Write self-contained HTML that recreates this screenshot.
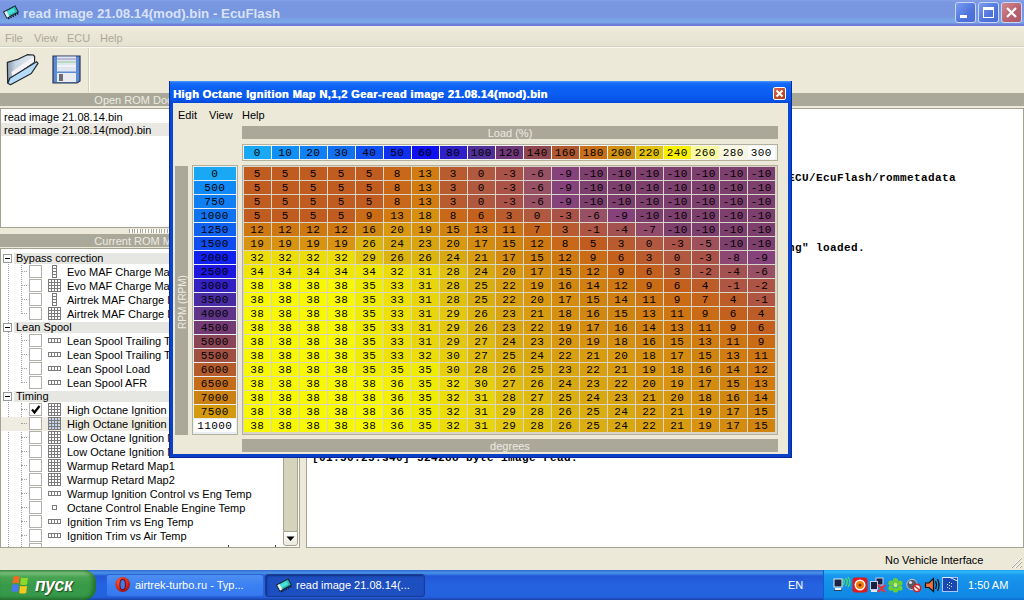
<!DOCTYPE html>
<html><head><meta charset="utf-8"><title>EcuFlash</title>
<style>
*{margin:0;padding:0;box-sizing:border-box}
html,body{width:1024px;height:600px;overflow:hidden}
body{position:relative;background:#ece9d8;font-family:"Liberation Sans",sans-serif;font-size:11px;color:#000}
.a{position:absolute}
.mono{font-family:"Liberation Mono",monospace}
.t{white-space:pre;line-height:13px}
</style></head><body>

<div class="a" style="left:0;top:0;width:1024px;height:26px;background:linear-gradient(#86a0e8 0,#7a98e2 2px,#7896e0 12px,#7898e0 17px,#7aa8e8 21px,#78a4e6 23px,#7080d8 24px,#6c7cd4 26px)"></div>
<svg class="a" style="left:1px;top:2px" width="20" height="18" viewBox="0 0 20 18">
<g transform="rotate(-28 10 10)"><path d="M5 13.5v2M7.5 13.5v2M10 13.5v2M12.5 13.5v2M15 13.5v2" stroke="#101828" stroke-width="1.4"/>
<rect x="3.5" y="6.5" width="13" height="7" fill="#2ab8b0" stroke="#182030" stroke-width="1"/><rect x="6" y="7.5" width="8" height="4" fill="#48e0d8"/><rect x="4" y="7" width="2.5" height="6" fill="#e8f0e8"/></g></svg>
<div class="a t" style="left:23px;top:6px;font-size:13.3px;font-weight:bold;color:#d8e2f8;line-height:16px">read image 21.08.14(mod).bin - EcuFlash</div>
<div class="a" style="left:955px;top:2px;width:21px;height:21px;border:1px solid #c8d6f6;border-radius:3px;background:linear-gradient(135deg,#7a9cf0,#4f74dc 60%,#4a6cd6)"><div class="a" style="left:4px;top:12px;width:7px;height:3px;background:#fff"></div></div>
<div class="a" style="left:978px;top:2px;width:21px;height:21px;border:1px solid #c8d6f6;border-radius:3px;background:linear-gradient(135deg,#7a9cf0,#4f74dc 60%,#4a6cd6)"><div class="a" style="left:4px;top:4px;width:11px;height:11px;border:1px solid #fff;border-top-width:3px"></div></div>
<div class="a" style="left:1001px;top:2px;width:21px;height:21px;border:1px solid #c8d6f6;border-radius:3px;background:linear-gradient(135deg,#d08888,#b86070 60%,#b05868)"><svg class="a" style="left:3px;top:3px" width="13" height="13"><path d="M2 2L11 11M11 2L2 11" stroke="#fff" stroke-width="2.2"/></svg></div>
<div class="a" style="left:0;top:26px;width:1024px;height:22px;background:#ece9d8;border-bottom:1px solid #faf9f2"></div><div class="a" style="left:0;top:26px;width:1024px;height:20px;background:linear-gradient(#f0eee4,#ece9d8 4px,#e6e2d2)"></div><div class="a" style="left:0;top:46px;width:1024px;height:1px;background:#d6d2c0"></div>
<div class="a t" style="left:5px;top:32px;color:#aca899">File</div>
<div class="a t" style="left:34px;top:32px;color:#aca899">View</div>
<div class="a t" style="left:67px;top:32px;color:#aca899">ECU</div>
<div class="a t" style="left:100px;top:32px;color:#aca899">Help</div>
<div class="a" style="left:0;top:48px;width:1024px;height:44px;background:#ece9d8"></div>
<div class="a" style="left:88px;top:48px;width:1px;height:44px;background:#d4d0c0"></div>
<div class="a" style="left:89px;top:48px;width:1px;height:44px;background:#fbfaf4"></div>
<svg class="a" style="left:0;top:44px" width="50" height="50" viewBox="0 44 50 50">
<defs><linearGradient id="fb" x1="0" y1="0" x2="1" y2="0"><stop offset="0" stop-color="#8898a8"/><stop offset="0.3" stop-color="#c8d6e4"/><stop offset="1" stop-color="#e4ecf4"/></linearGradient></defs>
<path d="M7.3 62.3 L15.3 60 L18 59.3 L27.3 54.7 L33.3 55 L34.7 56.7 L34.5 61.5 L10.3 78.5 L7.7 82.7 Z" fill="url(#fb)" stroke="#20282e" stroke-width="1.2" stroke-linejoin="round"/>
<path d="M11.5 72 L32 57.5 L34 59 L34 62 L12.5 77 Z" fill="#f6f2f6"/>
<path d="M9.8 78.3 L36.5 61.7 L38 63.3 L31.3 73.5 L10.5 84.7 L7.8 83.3 Z" fill="#b4dcf8" stroke="#20282e" stroke-width="1.2" stroke-linejoin="round"/>
</svg>
<svg class="a" style="left:52px;top:55px" width="30" height="30" viewBox="0 0 30 30">
<path d="M1 1 H28 V26 L25 28 H1 Z" fill="#5b8ad6" stroke="#2b3550" stroke-width="1.2"/>
<rect x="5" y="1.5" width="19" height="15" fill="#dfe6f0"/>
<rect x="5" y="3" width="19" height="2" fill="#b8b8d8"/><rect x="5" y="6" width="19" height="2" fill="#b8d8c0"/><rect x="5" y="10" width="19" height="2" fill="#f0f4f8"/>
<rect x="5" y="18" width="19" height="9" fill="#e8ecf0"/><rect x="7" y="19" width="4" height="7" fill="#6a6a70"/>
</svg>
<div class="a" style="left:0px;top:93px;width:303px;height:13px;background:#aaa899"></div>
<div class="a t" style="left:0px;top:94px;width:303px;text-align:center;color:#ecebe2">Open ROM Documents</div>
<div class="a" style="left:0;top:108px;width:300px;height:120px;background:#fff;border:1px solid #a5a292"></div>
<div class="a t" style="left:4px;top:111px">read image 21.08.14.bin</div>
<div class="a" style="left:1px;top:123px;width:298px;height:13px;background:#e9e8e2"></div>
<div class="a t" style="left:4px;top:124px">read image 21.08.14(mod).bin</div>
<div class="a" style="left:129px;top:229px;width:40px;height:4px;background:repeating-linear-gradient(90deg,#a8a594 0,#a8a594 1px,#fff 1px,#fff 2.7px)"></div>
<div class="a" style="left:0px;top:234px;width:303px;height:13px;background:#aaa899"></div>
<div class="a t" style="left:0px;top:235px;width:303px;text-align:center;color:#ecebe2">Current ROM Metadata</div>
<div class="a" style="left:0;top:248px;width:300px;height:300px;background:#fff;border:1px solid #a5a292"></div>
<div class="a" style="left:8px;top:264px;width:1px;height:283px;border-left:1px dotted #a0a0a0"></div>
<div class="a" style="left:21px;top:265px;width:1px;height:49px;border-left:1px dotted #a0a0a0"></div>
<div class="a" style="left:21px;top:334px;width:1px;height:49px;border-left:1px dotted #a0a0a0"></div>
<div class="a" style="left:21px;top:403px;width:1px;height:144px;border-left:1px dotted #a0a0a0"></div>
<div class="a" style="left:0;top:0;width:300px;height:547px;overflow:hidden">
<div class="a" style="left:14px;top:253px;width:286px;height:11px;background:#e6e6e2"></div>
<div class="a" style="left:3px;top:254px;width:9px;height:9px;border:1px solid #919b9c;background:#fff"></div>
<div class="a" style="left:5px;top:258px;width:5px;height:1px;background:#000"></div>
<div class="a t" style="left:16px;top:252px">Bypass correction</div>
<div class="a" style="left:21px;top:271px;width:6px;height:1px;border-top:1px dotted #a0a0a0"></div>
<div class="a" style="left:29px;top:265px;width:13px;height:13px;border:1px solid #b2b2aa;background:#fff"></div>
<svg class="a" style="left:52px;top:265px" width="5" height="13"><rect width="5" height="13" fill="#7a7a7a"/><rect x="1" y="1" width="3" height="2" fill="#fff"/><rect x="1" y="4" width="3" height="2" fill="#fff"/><rect x="1" y="7" width="3" height="2" fill="#fff"/><rect x="1" y="10" width="3" height="2" fill="#fff"/></svg>
<div class="a t" style="left:67px;top:266px">Evo MAF Charge Max Compensation</div>
<div class="a" style="left:21px;top:285px;width:6px;height:1px;border-top:1px dotted #a0a0a0"></div>
<div class="a" style="left:29px;top:279px;width:13px;height:13px;border:1px solid #b2b2aa;background:#fff"></div>
<svg class="a" style="left:48px;top:279px" width="13" height="13"><rect x="0" y="0" width="13" height="13" fill="#7a7a7a"/><rect x="1" y="1" width="2" height="2" fill="#fff"/><rect x="1" y="4" width="2" height="2" fill="#fff"/><rect x="1" y="7" width="2" height="2" fill="#fff"/><rect x="1" y="10" width="2" height="2" fill="#fff"/><rect x="4" y="1" width="2" height="2" fill="#fff"/><rect x="4" y="4" width="2" height="2" fill="#fff"/><rect x="4" y="7" width="2" height="2" fill="#fff"/><rect x="4" y="10" width="2" height="2" fill="#fff"/><rect x="7" y="1" width="2" height="2" fill="#fff"/><rect x="7" y="4" width="2" height="2" fill="#fff"/><rect x="7" y="7" width="2" height="2" fill="#fff"/><rect x="7" y="10" width="2" height="2" fill="#fff"/><rect x="10" y="1" width="2" height="2" fill="#fff"/><rect x="10" y="4" width="2" height="2" fill="#fff"/><rect x="10" y="7" width="2" height="2" fill="#fff"/><rect x="10" y="10" width="2" height="2" fill="#fff"/></svg>
<div class="a t" style="left:67px;top:280px">Evo MAF Charge Max Compensation</div>
<div class="a" style="left:21px;top:299px;width:6px;height:1px;border-top:1px dotted #a0a0a0"></div>
<div class="a" style="left:29px;top:293px;width:13px;height:13px;border:1px solid #b2b2aa;background:#fff"></div>
<svg class="a" style="left:52px;top:293px" width="5" height="13"><rect width="5" height="13" fill="#7a7a7a"/><rect x="1" y="1" width="3" height="2" fill="#fff"/><rect x="1" y="4" width="3" height="2" fill="#fff"/><rect x="1" y="7" width="3" height="2" fill="#fff"/><rect x="1" y="10" width="3" height="2" fill="#fff"/></svg>
<div class="a t" style="left:67px;top:294px">Airtrek MAF Charge Max Compensation</div>
<div class="a" style="left:21px;top:313px;width:6px;height:1px;border-top:1px dotted #a0a0a0"></div>
<div class="a" style="left:29px;top:307px;width:13px;height:13px;border:1px solid #b2b2aa;background:#fff"></div>
<svg class="a" style="left:48px;top:307px" width="13" height="13"><rect x="0" y="0" width="13" height="13" fill="#7a7a7a"/><rect x="1" y="1" width="2" height="2" fill="#fff"/><rect x="1" y="4" width="2" height="2" fill="#fff"/><rect x="1" y="7" width="2" height="2" fill="#fff"/><rect x="1" y="10" width="2" height="2" fill="#fff"/><rect x="4" y="1" width="2" height="2" fill="#fff"/><rect x="4" y="4" width="2" height="2" fill="#fff"/><rect x="4" y="7" width="2" height="2" fill="#fff"/><rect x="4" y="10" width="2" height="2" fill="#fff"/><rect x="7" y="1" width="2" height="2" fill="#fff"/><rect x="7" y="4" width="2" height="2" fill="#fff"/><rect x="7" y="7" width="2" height="2" fill="#fff"/><rect x="7" y="10" width="2" height="2" fill="#fff"/><rect x="10" y="1" width="2" height="2" fill="#fff"/><rect x="10" y="4" width="2" height="2" fill="#fff"/><rect x="10" y="7" width="2" height="2" fill="#fff"/><rect x="10" y="10" width="2" height="2" fill="#fff"/></svg>
<div class="a t" style="left:67px;top:308px">Airtrek MAF Charge Max Compensation</div>
<div class="a" style="left:14px;top:322px;width:286px;height:11px;background:#e6e6e2"></div>
<div class="a" style="left:3px;top:323px;width:9px;height:9px;border:1px solid #919b9c;background:#fff"></div>
<div class="a" style="left:5px;top:327px;width:5px;height:1px;background:#000"></div>
<div class="a t" style="left:16px;top:321px">Lean Spool</div>
<div class="a" style="left:21px;top:340px;width:6px;height:1px;border-top:1px dotted #a0a0a0"></div>
<div class="a" style="left:29px;top:334px;width:13px;height:13px;border:1px solid #b2b2aa;background:#fff"></div>
<svg class="a" style="left:48px;top:338px" width="13" height="5"><rect width="13" height="5" fill="#7a7a7a"/><rect x="1" y="1" width="2" height="3" fill="#fff"/><rect x="4" y="1" width="2" height="3" fill="#fff"/><rect x="7" y="1" width="2" height="3" fill="#fff"/><rect x="10" y="1" width="2" height="3" fill="#fff"/></svg>
<div class="a t" style="left:67px;top:335px">Lean Spool Trailing Timing</div>
<div class="a" style="left:21px;top:354px;width:6px;height:1px;border-top:1px dotted #a0a0a0"></div>
<div class="a" style="left:29px;top:348px;width:13px;height:13px;border:1px solid #b2b2aa;background:#fff"></div>
<svg class="a" style="left:48px;top:352px" width="13" height="5"><rect width="13" height="5" fill="#7a7a7a"/><rect x="1" y="1" width="2" height="3" fill="#fff"/><rect x="4" y="1" width="2" height="3" fill="#fff"/><rect x="7" y="1" width="2" height="3" fill="#fff"/><rect x="10" y="1" width="2" height="3" fill="#fff"/></svg>
<div class="a t" style="left:67px;top:349px">Lean Spool Trailing Timing</div>
<div class="a" style="left:21px;top:368px;width:6px;height:1px;border-top:1px dotted #a0a0a0"></div>
<div class="a" style="left:29px;top:362px;width:13px;height:13px;border:1px solid #b2b2aa;background:#fff"></div>
<svg class="a" style="left:48px;top:366px" width="13" height="5"><rect width="13" height="5" fill="#7a7a7a"/><rect x="1" y="1" width="2" height="3" fill="#fff"/><rect x="4" y="1" width="2" height="3" fill="#fff"/><rect x="7" y="1" width="2" height="3" fill="#fff"/><rect x="10" y="1" width="2" height="3" fill="#fff"/></svg>
<div class="a t" style="left:67px;top:363px">Lean Spool Load</div>
<div class="a" style="left:21px;top:382px;width:6px;height:1px;border-top:1px dotted #a0a0a0"></div>
<div class="a" style="left:29px;top:376px;width:13px;height:13px;border:1px solid #b2b2aa;background:#fff"></div>
<svg class="a" style="left:48px;top:380px" width="13" height="5"><rect width="13" height="5" fill="#7a7a7a"/><rect x="1" y="1" width="2" height="3" fill="#fff"/><rect x="4" y="1" width="2" height="3" fill="#fff"/><rect x="7" y="1" width="2" height="3" fill="#fff"/><rect x="10" y="1" width="2" height="3" fill="#fff"/></svg>
<div class="a t" style="left:67px;top:377px">Lean Spool AFR</div>
<div class="a" style="left:14px;top:391px;width:286px;height:11px;background:#e6e6e2"></div>
<div class="a" style="left:3px;top:392px;width:9px;height:9px;border:1px solid #919b9c;background:#fff"></div>
<div class="a" style="left:5px;top:396px;width:5px;height:1px;background:#000"></div>
<div class="a t" style="left:16px;top:390px">Timing</div>
<div class="a" style="left:21px;top:409px;width:6px;height:1px;border-top:1px dotted #a0a0a0"></div>
<div class="a" style="left:29px;top:403px;width:13px;height:13px;border:1px solid #b2b2aa;background:#fff"></div>
<svg class="a" style="left:29px;top:403px" width="13" height="13"><path d="M3 6.5 L5.5 9.5 L10.5 3" fill="none" stroke="#000" stroke-width="2.2"/></svg>
<svg class="a" style="left:48px;top:403px" width="13" height="13"><rect x="0" y="0" width="13" height="13" fill="#7a7a7a"/><rect x="1" y="1" width="2" height="2" fill="#fff"/><rect x="1" y="4" width="2" height="2" fill="#fff"/><rect x="1" y="7" width="2" height="2" fill="#fff"/><rect x="1" y="10" width="2" height="2" fill="#fff"/><rect x="4" y="1" width="2" height="2" fill="#fff"/><rect x="4" y="4" width="2" height="2" fill="#fff"/><rect x="4" y="7" width="2" height="2" fill="#fff"/><rect x="4" y="10" width="2" height="2" fill="#fff"/><rect x="7" y="1" width="2" height="2" fill="#fff"/><rect x="7" y="4" width="2" height="2" fill="#fff"/><rect x="7" y="7" width="2" height="2" fill="#fff"/><rect x="7" y="10" width="2" height="2" fill="#fff"/><rect x="10" y="1" width="2" height="2" fill="#fff"/><rect x="10" y="4" width="2" height="2" fill="#fff"/><rect x="10" y="7" width="2" height="2" fill="#fff"/><rect x="10" y="10" width="2" height="2" fill="#fff"/></svg>
<div class="a t" style="left:67px;top:404px">High Octane Ignition Map N,1,2 Gear</div>
<div class="a" style="left:1px;top:417px;width:299px;height:14px;background:#efede2"></div>
<div class="a" style="left:21px;top:423px;width:6px;height:1px;border-top:1px dotted #a0a0a0"></div>
<div class="a" style="left:29px;top:417px;width:13px;height:13px;border:1px solid #b2b2aa;background:#fff"></div>
<svg class="a" style="left:48px;top:417px" width="13" height="13"><rect x="0" y="0" width="13" height="13" fill="#7a7a7a"/><rect x="1" y="1" width="2" height="2" fill="#c6d4ee"/><rect x="1" y="4" width="2" height="2" fill="#c6d4ee"/><rect x="1" y="7" width="2" height="2" fill="#c6d4ee"/><rect x="1" y="10" width="2" height="2" fill="#c6d4ee"/><rect x="4" y="1" width="2" height="2" fill="#c6d4ee"/><rect x="4" y="4" width="2" height="2" fill="#c6d4ee"/><rect x="4" y="7" width="2" height="2" fill="#c6d4ee"/><rect x="4" y="10" width="2" height="2" fill="#c6d4ee"/><rect x="7" y="1" width="2" height="2" fill="#c6d4ee"/><rect x="7" y="4" width="2" height="2" fill="#c6d4ee"/><rect x="7" y="7" width="2" height="2" fill="#c6d4ee"/><rect x="7" y="10" width="2" height="2" fill="#c6d4ee"/><rect x="10" y="1" width="2" height="2" fill="#c6d4ee"/><rect x="10" y="4" width="2" height="2" fill="#c6d4ee"/><rect x="10" y="7" width="2" height="2" fill="#c6d4ee"/><rect x="10" y="10" width="2" height="2" fill="#c6d4ee"/></svg>
<div class="a t" style="left:67px;top:418px">High Octane Ignition Map 3,4,5 Gear</div>
<div class="a" style="left:21px;top:437px;width:6px;height:1px;border-top:1px dotted #a0a0a0"></div>
<div class="a" style="left:29px;top:431px;width:13px;height:13px;border:1px solid #b2b2aa;background:#fff"></div>
<svg class="a" style="left:48px;top:431px" width="13" height="13"><rect x="0" y="0" width="13" height="13" fill="#7a7a7a"/><rect x="1" y="1" width="2" height="2" fill="#fff"/><rect x="1" y="4" width="2" height="2" fill="#fff"/><rect x="1" y="7" width="2" height="2" fill="#fff"/><rect x="1" y="10" width="2" height="2" fill="#fff"/><rect x="4" y="1" width="2" height="2" fill="#fff"/><rect x="4" y="4" width="2" height="2" fill="#fff"/><rect x="4" y="7" width="2" height="2" fill="#fff"/><rect x="4" y="10" width="2" height="2" fill="#fff"/><rect x="7" y="1" width="2" height="2" fill="#fff"/><rect x="7" y="4" width="2" height="2" fill="#fff"/><rect x="7" y="7" width="2" height="2" fill="#fff"/><rect x="7" y="10" width="2" height="2" fill="#fff"/><rect x="10" y="1" width="2" height="2" fill="#fff"/><rect x="10" y="4" width="2" height="2" fill="#fff"/><rect x="10" y="7" width="2" height="2" fill="#fff"/><rect x="10" y="10" width="2" height="2" fill="#fff"/></svg>
<div class="a t" style="left:67px;top:432px">Low Octane Ignition Map</div>
<div class="a" style="left:21px;top:451px;width:6px;height:1px;border-top:1px dotted #a0a0a0"></div>
<div class="a" style="left:29px;top:445px;width:13px;height:13px;border:1px solid #b2b2aa;background:#fff"></div>
<svg class="a" style="left:48px;top:445px" width="13" height="13"><rect x="0" y="0" width="13" height="13" fill="#7a7a7a"/><rect x="1" y="1" width="2" height="2" fill="#fff"/><rect x="1" y="4" width="2" height="2" fill="#fff"/><rect x="1" y="7" width="2" height="2" fill="#fff"/><rect x="1" y="10" width="2" height="2" fill="#fff"/><rect x="4" y="1" width="2" height="2" fill="#fff"/><rect x="4" y="4" width="2" height="2" fill="#fff"/><rect x="4" y="7" width="2" height="2" fill="#fff"/><rect x="4" y="10" width="2" height="2" fill="#fff"/><rect x="7" y="1" width="2" height="2" fill="#fff"/><rect x="7" y="4" width="2" height="2" fill="#fff"/><rect x="7" y="7" width="2" height="2" fill="#fff"/><rect x="7" y="10" width="2" height="2" fill="#fff"/><rect x="10" y="1" width="2" height="2" fill="#fff"/><rect x="10" y="4" width="2" height="2" fill="#fff"/><rect x="10" y="7" width="2" height="2" fill="#fff"/><rect x="10" y="10" width="2" height="2" fill="#fff"/></svg>
<div class="a t" style="left:67px;top:446px">Low Octane Ignition Map</div>
<div class="a" style="left:21px;top:465px;width:6px;height:1px;border-top:1px dotted #a0a0a0"></div>
<div class="a" style="left:29px;top:459px;width:13px;height:13px;border:1px solid #b2b2aa;background:#fff"></div>
<svg class="a" style="left:48px;top:459px" width="13" height="13"><rect x="0" y="0" width="13" height="13" fill="#7a7a7a"/><rect x="1" y="1" width="2" height="2" fill="#fff"/><rect x="1" y="4" width="2" height="2" fill="#fff"/><rect x="1" y="7" width="2" height="2" fill="#fff"/><rect x="1" y="10" width="2" height="2" fill="#fff"/><rect x="4" y="1" width="2" height="2" fill="#fff"/><rect x="4" y="4" width="2" height="2" fill="#fff"/><rect x="4" y="7" width="2" height="2" fill="#fff"/><rect x="4" y="10" width="2" height="2" fill="#fff"/><rect x="7" y="1" width="2" height="2" fill="#fff"/><rect x="7" y="4" width="2" height="2" fill="#fff"/><rect x="7" y="7" width="2" height="2" fill="#fff"/><rect x="7" y="10" width="2" height="2" fill="#fff"/><rect x="10" y="1" width="2" height="2" fill="#fff"/><rect x="10" y="4" width="2" height="2" fill="#fff"/><rect x="10" y="7" width="2" height="2" fill="#fff"/><rect x="10" y="10" width="2" height="2" fill="#fff"/></svg>
<div class="a t" style="left:67px;top:460px">Warmup Retard Map1</div>
<div class="a" style="left:21px;top:479px;width:6px;height:1px;border-top:1px dotted #a0a0a0"></div>
<div class="a" style="left:29px;top:473px;width:13px;height:13px;border:1px solid #b2b2aa;background:#fff"></div>
<svg class="a" style="left:48px;top:473px" width="13" height="13"><rect x="0" y="0" width="13" height="13" fill="#7a7a7a"/><rect x="1" y="1" width="2" height="2" fill="#fff"/><rect x="1" y="4" width="2" height="2" fill="#fff"/><rect x="1" y="7" width="2" height="2" fill="#fff"/><rect x="1" y="10" width="2" height="2" fill="#fff"/><rect x="4" y="1" width="2" height="2" fill="#fff"/><rect x="4" y="4" width="2" height="2" fill="#fff"/><rect x="4" y="7" width="2" height="2" fill="#fff"/><rect x="4" y="10" width="2" height="2" fill="#fff"/><rect x="7" y="1" width="2" height="2" fill="#fff"/><rect x="7" y="4" width="2" height="2" fill="#fff"/><rect x="7" y="7" width="2" height="2" fill="#fff"/><rect x="7" y="10" width="2" height="2" fill="#fff"/><rect x="10" y="1" width="2" height="2" fill="#fff"/><rect x="10" y="4" width="2" height="2" fill="#fff"/><rect x="10" y="7" width="2" height="2" fill="#fff"/><rect x="10" y="10" width="2" height="2" fill="#fff"/></svg>
<div class="a t" style="left:67px;top:474px">Warmup Retard Map2</div>
<div class="a" style="left:21px;top:493px;width:6px;height:1px;border-top:1px dotted #a0a0a0"></div>
<div class="a" style="left:29px;top:487px;width:13px;height:13px;border:1px solid #b2b2aa;background:#fff"></div>
<svg class="a" style="left:48px;top:491px" width="13" height="5"><rect width="13" height="5" fill="#7a7a7a"/><rect x="1" y="1" width="2" height="3" fill="#fff"/><rect x="4" y="1" width="2" height="3" fill="#fff"/><rect x="7" y="1" width="2" height="3" fill="#fff"/><rect x="10" y="1" width="2" height="3" fill="#fff"/></svg>
<div class="a t" style="left:67px;top:488px">Warmup Ignition Control vs Eng Temp</div>
<div class="a" style="left:21px;top:507px;width:6px;height:1px;border-top:1px dotted #a0a0a0"></div>
<div class="a" style="left:29px;top:501px;width:13px;height:13px;border:1px solid #b2b2aa;background:#fff"></div>
<div class="a" style="left:52px;top:505px;width:5px;height:5px;border:1px solid #7a7a7a;background:#fff"></div>
<div class="a t" style="left:67px;top:502px">Octane Control Enable Engine Temp</div>
<div class="a" style="left:21px;top:521px;width:6px;height:1px;border-top:1px dotted #a0a0a0"></div>
<div class="a" style="left:29px;top:515px;width:13px;height:13px;border:1px solid #b2b2aa;background:#fff"></div>
<svg class="a" style="left:48px;top:519px" width="13" height="5"><rect width="13" height="5" fill="#7a7a7a"/><rect x="1" y="1" width="2" height="3" fill="#fff"/><rect x="4" y="1" width="2" height="3" fill="#fff"/><rect x="7" y="1" width="2" height="3" fill="#fff"/><rect x="10" y="1" width="2" height="3" fill="#fff"/></svg>
<div class="a t" style="left:67px;top:516px">Ignition Trim vs Eng Temp</div>
<div class="a" style="left:21px;top:535px;width:6px;height:1px;border-top:1px dotted #a0a0a0"></div>
<div class="a" style="left:29px;top:529px;width:13px;height:13px;border:1px solid #b2b2aa;background:#fff"></div>
<svg class="a" style="left:48px;top:533px" width="13" height="5"><rect width="13" height="5" fill="#7a7a7a"/><rect x="1" y="1" width="2" height="3" fill="#fff"/><rect x="4" y="1" width="2" height="3" fill="#fff"/><rect x="7" y="1" width="2" height="3" fill="#fff"/><rect x="10" y="1" width="2" height="3" fill="#fff"/></svg>
<div class="a t" style="left:67px;top:530px">Ignition Trim vs Air Temp</div>
<div class="a" style="left:21px;top:549px;width:6px;height:1px;border-top:1px dotted #a0a0a0"></div>
<div class="a" style="left:29px;top:543px;width:13px;height:13px;border:1px solid #b2b2aa;background:#fff"></div>
<svg class="a" style="left:48px;top:547px" width="13" height="5"><rect width="13" height="5" fill="#7a7a7a"/><rect x="1" y="1" width="2" height="3" fill="#fff"/><rect x="4" y="1" width="2" height="3" fill="#fff"/><rect x="7" y="1" width="2" height="3" fill="#fff"/><rect x="10" y="1" width="2" height="3" fill="#fff"/></svg>
<div class="a t" style="left:67px;top:544px"></div>
</div>
<div class="a" style="left:228px;top:545px;width:1px;height:2px;background:#444"></div><div class="a" style="left:275px;top:545px;width:1px;height:2px;background:#444"></div>
<div class="a" style="left:282px;top:249px;width:17px;height:298px;background:#fbfbf8"></div>
<div class="a" style="left:283px;top:262px;width:15px;height:270px;background:#d6d3bc;border:1px solid #a6a48e;border-radius:2px"></div>
<div class="a" style="left:283px;top:531px;width:15px;height:15px;background:linear-gradient(#fff,#ebe9dc);border:1px solid #a6a48e;border-radius:0 0 3px 3px"></div>
<svg class="a" style="left:286px;top:535px" width="9" height="7"><path d="M0.5 1.5 H8.5 L4.5 6 Z" fill="#000"/></svg>
<div class="a" style="left:306px;top:93px;width:718px;height:13px;background:#aaa899"></div>
<div class="a t" style="left:306px;top:94px;width:718px;text-align:center;color:#ecebe2">Log</div>
<div class="a" style="left:306px;top:108px;width:718px;height:440px;background:#fff;border:1px solid #a5a292"></div>
<div class="a mono" style="left:312px;top:115px;white-space:pre;font-size:11px;letter-spacing:0.4px;line-height:14px;font-weight:bold">[01:50:20.109] EcuFlash 1.42.2595 started.</div>
<div class="a mono" style="left:312px;top:171px;white-space:pre;font-size:11px;letter-spacing:0.4px;line-height:14px;font-weight:bold">[01:50:20.156] loading metadata from C:/Program Files/Open Source/OpECU/EcuFlash/rommetadata</div>
<div class="a mono" style="left:312px;top:241px;white-space:pre;font-size:11px;letter-spacing:0.4px;line-height:14px;font-weight:bold">[01:50:21.453] metadata "C:/Program Files/OpenECU/rommetadata/stri  ng" loaded.</div>
<div class="a mono" style="left:312px;top:451px;white-space:pre;font-size:11px;letter-spacing:0.4px;line-height:14px;font-weight:bold">[01:50:25.340] 524288 byte image read.</div>
<div class="a t" style="left:885px;top:554px">No Vehicle Interface</div>
<svg class="a" style="left:1010px;top:556px" width="13" height="13"><path d="M12 1L1 12M12 5L5 12M12 9L9 12" stroke="#fff" stroke-width="1"/><path d="M12 2L2 12M12 6L6 12M12 10L10 12" stroke="#aca899" stroke-width="1"/></svg>
<div class="a" style="left:0;top:570px;width:1024px;height:30px;background:linear-gradient(#3168d5 0,#4993e6 3px,#2157d7 6px,#2663e0 50%,#2461df 90%,#1941a5 100%)"></div>
<div class="a" style="left:0;top:570px;width:96px;height:30px;border-radius:0 12px 12px 0;background:linear-gradient(#4a9a50 0,#78c07c 3px,#48a452 7px,#389a48 50%,#36984a 85%,#2c7e3a 100%);box-shadow:inset -3px 0 4px rgba(0,60,0,.45)"></div>
<svg class="a" style="left:11px;top:575px" width="20" height="19" viewBox="0 0 20 19">
<path d="M2.5 1.5 Q5.5 0.5 8.5 1.5 L7.8 8.5 Q5 7.5 1.5 8.5 Z" fill="#f06a20"/>
<path d="M10 2.5 Q13.5 3.5 17 2.5 L16 9.5 Q12.5 10.5 9.2 9.5 Z" fill="#8ed828"/>
<path d="M1.3 9.8 Q4.5 8.8 7.6 9.8 L6.8 17 Q4 16 0.5 17 Z" fill="#4a78f0"/>
<path d="M9 10.8 Q12.5 11.8 16 10.8 L15.2 18 Q11.5 19 8.2 18 Z" fill="#f8c820"/>
</svg>
<div class="a t" style="left:35px;top:575px;font-size:17.5px;letter-spacing:-0.4px;line-height:20px;font-weight:bold;font-style:italic;color:#fff;text-shadow:1px 1px 1px #1a4a1a">пуск</div>
<div class="a" style="left:106px;top:574px;width:158px;height:23px;border-radius:3px;background:linear-gradient(#4d8ef0,#3c81f3 50%,#3478ee);border:1px solid #2a64d8"></div>
<svg class="a" style="left:115px;top:577px" width="16" height="16"><defs><radialGradient id="op" cx="0.4" cy="0.35" r="0.7"><stop offset="0" stop-color="#ff7040"/><stop offset="0.6" stop-color="#e02810"/><stop offset="1" stop-color="#901010"/></radialGradient></defs><ellipse cx="7.7" cy="7.5" rx="7.3" ry="7.5" fill="url(#op)"/><ellipse cx="7.7" cy="7.5" rx="2.8" ry="5.2" fill="#3c7ef0" stroke="#701030" stroke-width="1.2"/></svg>
<div class="a t" style="left:135px;top:579px;color:#fff">airtrek-turbo.ru - Typ...</div>
<div class="a" style="left:265px;top:574px;width:160px;height:23px;border-radius:3px;background:#1e4fc0;border:1px solid #183c98;box-shadow:inset 1px 1px 2px #10307c"></div>
<svg class="a" style="left:274px;top:575px" width="20" height="18" viewBox="0 0 20 18">
<g transform="rotate(-28 10 10)"><path d="M5 13.5v2M7.5 13.5v2M10 13.5v2M12.5 13.5v2M15 13.5v2" stroke="#101828" stroke-width="1.4"/>
<rect x="3.5" y="6.5" width="13" height="7" fill="#2ab8b0" stroke="#182030" stroke-width="1"/><rect x="6" y="7.5" width="8" height="4" fill="#48e0d8"/><rect x="4" y="7" width="2.5" height="6" fill="#e8f0e8"/></g></svg>
<div class="a t" style="left:296px;top:579px;color:#fff">read image 21.08.14(...</div>
<div class="a t" style="left:788px;top:579px;color:#fff">EN</div>
<div class="a" style="left:823px;top:570px;width:201px;height:30px;background:linear-gradient(#18a0f0 0,#30b8fa 2px,#1898ec 5px,#148ee8 50%,#1088e4 90%,#0c70d0 100%);border-left:1px solid #0a60cc"></div>
<svg class="a" style="left:826px;top:572px" width="140" height="26" viewBox="826 572 140 26">
<rect x="834" y="579" width="8" height="8" fill="#1a2440" stroke="#e8eef8" stroke-width="1"/>
<rect x="835" y="588" width="6" height="2" fill="#f4f4f4"/><rect x="834" y="590" width="8" height="1" fill="#30405a"/>
<path d="M843 579 Q845.5 582 843 585 M845.5 578 Q849 582 845.5 586 M848 577 Q852 582 848 587" fill="none" stroke="#50e060" stroke-width="1.2"/>
<rect x="852.5" y="577.5" width="15" height="15" rx="3" fill="#e01818"/>
<circle cx="860" cy="585" r="5.5" fill="#fff"/><circle cx="860" cy="585" r="4" fill="#f08010"/><circle cx="860" cy="585" r="1.5" fill="#902000"/>
<rect x="876" y="578" width="7" height="7" fill="#1a2040" stroke="#c8d0f0" stroke-width="1"/>
<rect x="870.5" y="581.5" width="7" height="8" fill="#1a2040" stroke="#c8d0f0" stroke-width="1"/>
<rect x="871" y="590" width="6" height="2" fill="#e8e8f0"/>
<path d="M878 585 L885 592 M885 585 L878 592" stroke="#f03030" stroke-width="2"/>
<g fill="#6cd030"><circle cx="895.5" cy="580.5" r="2.6"/><circle cx="900" cy="583" r="2.6"/><circle cx="900" cy="588" r="2.6"/><circle cx="895.5" cy="590" r="2.6"/><circle cx="891" cy="588" r="2.6"/><circle cx="891" cy="583" r="2.6"/></g>
<circle cx="895.5" cy="585" r="2.2" fill="#c8f060"/>
<circle cx="912" cy="584.5" r="5.2" fill="#5a5a66" stroke="#c8c8d0" stroke-width="1"/><circle cx="910.5" cy="582.5" r="1.6" fill="#e0e0e8"/>
<circle cx="917" cy="588" r="3.6" fill="#fff" stroke="#d02020" stroke-width="1.6"/><path d="M914.5 586 L919.5 590" stroke="#d02020" stroke-width="1.4"/>
<path d="M925.5 583 H929 L933.5 578.5 V591.5 L929 587.5 H925.5 Z" fill="#f07040" stroke="#111" stroke-width="1.2"/>
<path d="M935.5 581 Q937.5 585 935.5 589 M937.5 579 Q940.5 585 937.5 591" fill="none" stroke="#111" stroke-width="1.2"/>
<rect x="942.5" y="577.5" width="15" height="14" fill="#1848b0" stroke="#a8c8ff" stroke-width="1"/>
<path d="M942.5 577.5 H950 L957.5 581" fill="none" stroke="#e0f0ff" stroke-width="1"/>
<g fill="#d0e4ff"><rect x="949" y="582" width="1" height="1"/><rect x="951" y="583" width="1" height="1"/><rect x="947" y="584" width="1" height="1"/><rect x="949" y="585" width="1" height="1"/><rect x="951" y="586" width="1" height="1"/><rect x="947" y="587" width="1" height="1"/><rect x="949" y="588" width="1" height="1"/></g>
</svg>
<div class="a t" style="left:968px;top:579px;color:#fff">1:50 AM</div>
<div class="a" style="left:169px;top:81px;width:623px;height:377px;background:linear-gradient(#4a9cff 0,#1a6cf8 2px,#0c62f4 6px,#0a5cf0 14px,#0854e8 19px,#0648d8 22px,#0a40c8 100%);box-shadow:inset 1px 0 0 #0828a0,inset -1px 0 0 #0828a0,inset 0 -1px 0 #0828a0"></div>
<div class="a" style="left:173px;top:103px;width:615px;height:351px;background:#ece9d8"></div>
<div class="a t" style="left:173px;top:88px;font-size:11px;letter-spacing:0.42px;font-weight:bold;color:#fff;text-shadow:0.5px 0 0 #fff">High Octane Ignition Map N,1,2 Gear-read image 21.08.14(mod).bin</div>
<div class="a" style="left:773px;top:87px;width:13px;height:13px;border:1px solid #fff;border-radius:2px;background:linear-gradient(135deg,#d86848,#c04828 60%,#b83c20)"></div>
<svg class="a" style="left:773px;top:87px" width="13" height="13"><path d="M3.5 3.5L9.5 9.5M9.5 3.5L3.5 9.5" stroke="#fff" stroke-width="2"/></svg>
<div class="a t" style="left:178px;top:109px">Edit</div>
<div class="a t" style="left:209px;top:109px">View</div>
<div class="a t" style="left:242px;top:109px">Help</div>
<div class="a" style="left:242px;top:126px;width:536px;height:13px;background:#aca899"></div>
<div class="a t" style="left:242px;top:127px;width:536px;text-align:center;color:#ecebe2">Load (%)</div>
<div class="a" style="left:242px;top:439px;width:536px;height:13px;background:#aca899"></div>
<div class="a t" style="left:242px;top:440px;width:536px;height:12px;overflow:hidden;text-align:center;color:#ecebe2">degrees</div>
<div class="a" style="left:175px;top:166px;width:13px;height:269px;background:#aca899"></div>
<div class="a t" style="left:176px;top:166px;width:272px;height:13px;font-size:10px;text-align:center;color:#ecebe2;transform-origin:0 0;transform:translate(0px,272px) rotate(-90deg)">RPM (RPM)</div>
<div class="a" style="left:242px;top:144px;width:536px;height:17px;border:1px solid #b4b09c;background:#f2f4f4"></div>
<div class="a mono" style="left:244px;top:146px;width:27px;height:13px;background:#18a8f4;text-align:center;font-size:11px;letter-spacing:0.4px;text-indent:-0.6px;line-height:14px">0</div>
<div class="a mono" style="left:272px;top:146px;width:27px;height:13px;background:#1090f4;text-align:center;font-size:11px;letter-spacing:0.4px;text-indent:-0.6px;line-height:14px">10</div>
<div class="a mono" style="left:300px;top:146px;width:27px;height:13px;background:#1080f4;text-align:center;font-size:11px;letter-spacing:0.4px;text-indent:-0.6px;line-height:14px">20</div>
<div class="a mono" style="left:328px;top:146px;width:27px;height:13px;background:#1070f0;text-align:center;font-size:11px;letter-spacing:0.4px;text-indent:-0.6px;line-height:14px">30</div>
<div class="a mono" style="left:356px;top:146px;width:27px;height:13px;background:#1050f0;text-align:center;font-size:11px;letter-spacing:0.4px;text-indent:-0.6px;line-height:14px">40</div>
<div class="a mono" style="left:384px;top:146px;width:27px;height:13px;background:#1030f0;text-align:center;font-size:11px;letter-spacing:0.4px;text-indent:-0.6px;line-height:14px">50</div>
<div class="a mono" style="left:412px;top:146px;width:27px;height:13px;background:#1010f0;text-align:center;font-size:11px;letter-spacing:0.4px;text-indent:-0.6px;line-height:14px">60</div>
<div class="a mono" style="left:440px;top:146px;width:27px;height:13px;background:#3020c8;text-align:center;font-size:11px;letter-spacing:0.4px;text-indent:-0.6px;line-height:14px">80</div>
<div class="a mono" style="left:468px;top:146px;width:27px;height:13px;background:#503098;text-align:center;font-size:11px;letter-spacing:0.4px;text-indent:-0.6px;line-height:14px">100</div>
<div class="a mono" style="left:496px;top:146px;width:27px;height:13px;background:#703878;text-align:center;font-size:11px;letter-spacing:0.4px;text-indent:-0.6px;line-height:14px">120</div>
<div class="a mono" style="left:524px;top:146px;width:27px;height:13px;background:#904850;text-align:center;font-size:11px;letter-spacing:0.4px;text-indent:-0.6px;line-height:14px">140</div>
<div class="a mono" style="left:552px;top:146px;width:27px;height:13px;background:#b05830;text-align:center;font-size:11px;letter-spacing:0.4px;text-indent:-0.6px;line-height:14px">160</div>
<div class="a mono" style="left:580px;top:146px;width:27px;height:13px;background:#c87018;text-align:center;font-size:11px;letter-spacing:0.4px;text-indent:-0.6px;line-height:14px">180</div>
<div class="a mono" style="left:608px;top:146px;width:27px;height:13px;background:#d09010;text-align:center;font-size:11px;letter-spacing:0.4px;text-indent:-0.6px;line-height:14px">200</div>
<div class="a mono" style="left:636px;top:146px;width:27px;height:13px;background:#e0c010;text-align:center;font-size:11px;letter-spacing:0.4px;text-indent:-0.6px;line-height:14px">220</div>
<div class="a mono" style="left:664px;top:146px;width:27px;height:13px;background:#f8f000;text-align:center;font-size:11px;letter-spacing:0.4px;text-indent:-0.6px;line-height:14px">240</div>
<div class="a mono" style="left:692px;top:146px;width:27px;height:13px;background:#f8f8a0;text-align:center;font-size:11px;letter-spacing:0.4px;text-indent:-0.6px;line-height:14px">260</div>
<div class="a mono" style="left:720px;top:146px;width:27px;height:13px;background:#f8f8e0;text-align:center;font-size:11px;letter-spacing:0.4px;text-indent:-0.6px;line-height:14px">280</div>
<div class="a mono" style="left:748px;top:146px;width:27px;height:13px;background:#ffffff;text-align:center;font-size:11px;letter-spacing:0.4px;text-indent:-0.6px;line-height:14px">300</div>
<div class="a" style="left:192px;top:165px;width:46px;height:270px;border:1px solid #b4b09c;background:#e8eef4"></div>
<div class="a mono" style="left:194px;top:167px;width:42px;height:13px;background:#18a8f4;text-align:center;font-size:11px;letter-spacing:0.4px;text-indent:-0.6px;line-height:14px">0</div>
<div class="a mono" style="left:194px;top:181px;width:42px;height:13px;background:#108af4;text-align:center;font-size:11px;letter-spacing:0.4px;text-indent:-0.6px;line-height:14px">500</div>
<div class="a mono" style="left:194px;top:195px;width:42px;height:13px;background:#107ff4;text-align:center;font-size:11px;letter-spacing:0.4px;text-indent:-0.6px;line-height:14px">750</div>
<div class="a mono" style="left:194px;top:209px;width:42px;height:13px;background:#1074f1;text-align:center;font-size:11px;letter-spacing:0.4px;text-indent:-0.6px;line-height:14px">1000</div>
<div class="a mono" style="left:194px;top:223px;width:42px;height:13px;background:#1063f0;text-align:center;font-size:11px;letter-spacing:0.4px;text-indent:-0.6px;line-height:14px">1250</div>
<div class="a mono" style="left:194px;top:237px;width:42px;height:13px;background:#104df0;text-align:center;font-size:11px;letter-spacing:0.4px;text-indent:-0.6px;line-height:14px">1500</div>
<div class="a mono" style="left:194px;top:251px;width:42px;height:13px;background:#1021f0;text-align:center;font-size:11px;letter-spacing:0.4px;text-indent:-0.6px;line-height:14px">2000</div>
<div class="a mono" style="left:194px;top:265px;width:42px;height:13px;background:#1d17e0;text-align:center;font-size:11px;letter-spacing:0.4px;text-indent:-0.6px;line-height:14px">2500</div>
<div class="a mono" style="left:194px;top:279px;width:42px;height:13px;background:#3321c4;text-align:center;font-size:11px;letter-spacing:0.4px;text-indent:-0.6px;line-height:14px">3000</div>
<div class="a mono" style="left:194px;top:293px;width:42px;height:13px;background:#492ca3;text-align:center;font-size:11px;letter-spacing:0.4px;text-indent:-0.6px;line-height:14px">3500</div>
<div class="a mono" style="left:194px;top:307px;width:42px;height:13px;background:#5f3489;text-align:center;font-size:11px;letter-spacing:0.4px;text-indent:-0.6px;line-height:14px">4000</div>
<div class="a mono" style="left:194px;top:321px;width:42px;height:13px;background:#743a73;text-align:center;font-size:11px;letter-spacing:0.4px;text-indent:-0.6px;line-height:14px">4500</div>
<div class="a mono" style="left:194px;top:335px;width:42px;height:13px;background:#8a4557;text-align:center;font-size:11px;letter-spacing:0.4px;text-indent:-0.6px;line-height:14px">5000</div>
<div class="a mono" style="left:194px;top:349px;width:42px;height:13px;background:#a05040;text-align:center;font-size:11px;letter-spacing:0.4px;text-indent:-0.6px;line-height:14px">5500</div>
<div class="a mono" style="left:194px;top:363px;width:42px;height:13px;background:#b45c2c;text-align:center;font-size:11px;letter-spacing:0.4px;text-indent:-0.6px;line-height:14px">6000</div>
<div class="a mono" style="left:194px;top:377px;width:42px;height:13px;background:#c56d1b;text-align:center;font-size:11px;letter-spacing:0.4px;text-indent:-0.6px;line-height:14px">6500</div>
<div class="a mono" style="left:194px;top:391px;width:42px;height:13px;background:#cc8114;text-align:center;font-size:11px;letter-spacing:0.4px;text-indent:-0.6px;line-height:14px">7000</div>
<div class="a mono" style="left:194px;top:405px;width:42px;height:13px;background:#d49b10;text-align:center;font-size:11px;letter-spacing:0.4px;text-indent:-0.6px;line-height:14px">7500</div>
<div class="a mono" style="left:194px;top:419px;width:42px;height:13px;background:#ffffff;text-align:center;font-size:11px;letter-spacing:0.4px;text-indent:-0.6px;line-height:14px">11000</div>
<div class="a" style="left:242px;top:165px;width:536px;height:270px;border:1px solid #b4b09c;background:#d8d4c8"></div>
<div class="a mono" style="left:244px;top:167px;width:27px;height:13px;background:#c05c20;text-align:center;font-size:11px;letter-spacing:0.4px;text-indent:-0.6px;line-height:14px">5</div>
<div class="a mono" style="left:272px;top:167px;width:27px;height:13px;background:#c05c20;text-align:center;font-size:11px;letter-spacing:0.4px;text-indent:-0.6px;line-height:14px">5</div>
<div class="a mono" style="left:300px;top:167px;width:27px;height:13px;background:#c05c20;text-align:center;font-size:11px;letter-spacing:0.4px;text-indent:-0.6px;line-height:14px">5</div>
<div class="a mono" style="left:328px;top:167px;width:27px;height:13px;background:#c05c20;text-align:center;font-size:11px;letter-spacing:0.4px;text-indent:-0.6px;line-height:14px">5</div>
<div class="a mono" style="left:356px;top:167px;width:27px;height:13px;background:#c05c20;text-align:center;font-size:11px;letter-spacing:0.4px;text-indent:-0.6px;line-height:14px">5</div>
<div class="a mono" style="left:384px;top:167px;width:27px;height:13px;background:#c86818;text-align:center;font-size:11px;letter-spacing:0.4px;text-indent:-0.6px;line-height:14px">8</div>
<div class="a mono" style="left:412px;top:167px;width:27px;height:13px;background:#d07c10;text-align:center;font-size:11px;letter-spacing:0.4px;text-indent:-0.6px;line-height:14px">13</div>
<div class="a mono" style="left:440px;top:167px;width:27px;height:13px;background:#b85c30;text-align:center;font-size:11px;letter-spacing:0.4px;text-indent:-0.6px;line-height:14px">3</div>
<div class="a mono" style="left:468px;top:167px;width:27px;height:13px;background:#b05840;text-align:center;font-size:11px;letter-spacing:0.4px;text-indent:-0.6px;line-height:14px">0</div>
<div class="a mono" style="left:496px;top:167px;width:27px;height:13px;background:#aa5248;text-align:center;font-size:11px;letter-spacing:0.4px;text-indent:-0.6px;line-height:14px">-3</div>
<div class="a mono" style="left:524px;top:167px;width:27px;height:13px;background:#985064;text-align:center;font-size:11px;letter-spacing:0.4px;text-indent:-0.6px;line-height:14px">-6</div>
<div class="a mono" style="left:552px;top:167px;width:27px;height:13px;background:#86427a;text-align:center;font-size:11px;letter-spacing:0.4px;text-indent:-0.6px;line-height:14px">-9</div>
<div class="a mono" style="left:580px;top:167px;width:27px;height:13px;background:#7d3f6e;text-align:center;font-size:11px;letter-spacing:0.4px;text-indent:-0.6px;line-height:14px">-10</div>
<div class="a mono" style="left:608px;top:167px;width:27px;height:13px;background:#7d3f6e;text-align:center;font-size:11px;letter-spacing:0.4px;text-indent:-0.6px;line-height:14px">-10</div>
<div class="a mono" style="left:636px;top:167px;width:27px;height:13px;background:#7d3f6e;text-align:center;font-size:11px;letter-spacing:0.4px;text-indent:-0.6px;line-height:14px">-10</div>
<div class="a mono" style="left:664px;top:167px;width:27px;height:13px;background:#7d3f6e;text-align:center;font-size:11px;letter-spacing:0.4px;text-indent:-0.6px;line-height:14px">-10</div>
<div class="a mono" style="left:692px;top:167px;width:27px;height:13px;background:#7d3f6e;text-align:center;font-size:11px;letter-spacing:0.4px;text-indent:-0.6px;line-height:14px">-10</div>
<div class="a mono" style="left:720px;top:167px;width:27px;height:13px;background:#7d3f6e;text-align:center;font-size:11px;letter-spacing:0.4px;text-indent:-0.6px;line-height:14px">-10</div>
<div class="a mono" style="left:748px;top:167px;width:27px;height:13px;background:#7d3f6e;text-align:center;font-size:11px;letter-spacing:0.4px;text-indent:-0.6px;line-height:14px">-10</div>
<div class="a mono" style="left:244px;top:181px;width:27px;height:13px;background:#c05c20;text-align:center;font-size:11px;letter-spacing:0.4px;text-indent:-0.6px;line-height:14px">5</div>
<div class="a mono" style="left:272px;top:181px;width:27px;height:13px;background:#c05c20;text-align:center;font-size:11px;letter-spacing:0.4px;text-indent:-0.6px;line-height:14px">5</div>
<div class="a mono" style="left:300px;top:181px;width:27px;height:13px;background:#c05c20;text-align:center;font-size:11px;letter-spacing:0.4px;text-indent:-0.6px;line-height:14px">5</div>
<div class="a mono" style="left:328px;top:181px;width:27px;height:13px;background:#c05c20;text-align:center;font-size:11px;letter-spacing:0.4px;text-indent:-0.6px;line-height:14px">5</div>
<div class="a mono" style="left:356px;top:181px;width:27px;height:13px;background:#c05c20;text-align:center;font-size:11px;letter-spacing:0.4px;text-indent:-0.6px;line-height:14px">5</div>
<div class="a mono" style="left:384px;top:181px;width:27px;height:13px;background:#c86818;text-align:center;font-size:11px;letter-spacing:0.4px;text-indent:-0.6px;line-height:14px">8</div>
<div class="a mono" style="left:412px;top:181px;width:27px;height:13px;background:#d07c10;text-align:center;font-size:11px;letter-spacing:0.4px;text-indent:-0.6px;line-height:14px">13</div>
<div class="a mono" style="left:440px;top:181px;width:27px;height:13px;background:#b85c30;text-align:center;font-size:11px;letter-spacing:0.4px;text-indent:-0.6px;line-height:14px">3</div>
<div class="a mono" style="left:468px;top:181px;width:27px;height:13px;background:#b05840;text-align:center;font-size:11px;letter-spacing:0.4px;text-indent:-0.6px;line-height:14px">0</div>
<div class="a mono" style="left:496px;top:181px;width:27px;height:13px;background:#aa5248;text-align:center;font-size:11px;letter-spacing:0.4px;text-indent:-0.6px;line-height:14px">-3</div>
<div class="a mono" style="left:524px;top:181px;width:27px;height:13px;background:#985064;text-align:center;font-size:11px;letter-spacing:0.4px;text-indent:-0.6px;line-height:14px">-6</div>
<div class="a mono" style="left:552px;top:181px;width:27px;height:13px;background:#86427a;text-align:center;font-size:11px;letter-spacing:0.4px;text-indent:-0.6px;line-height:14px">-9</div>
<div class="a mono" style="left:580px;top:181px;width:27px;height:13px;background:#7d3f6e;text-align:center;font-size:11px;letter-spacing:0.4px;text-indent:-0.6px;line-height:14px">-10</div>
<div class="a mono" style="left:608px;top:181px;width:27px;height:13px;background:#7d3f6e;text-align:center;font-size:11px;letter-spacing:0.4px;text-indent:-0.6px;line-height:14px">-10</div>
<div class="a mono" style="left:636px;top:181px;width:27px;height:13px;background:#7d3f6e;text-align:center;font-size:11px;letter-spacing:0.4px;text-indent:-0.6px;line-height:14px">-10</div>
<div class="a mono" style="left:664px;top:181px;width:27px;height:13px;background:#7d3f6e;text-align:center;font-size:11px;letter-spacing:0.4px;text-indent:-0.6px;line-height:14px">-10</div>
<div class="a mono" style="left:692px;top:181px;width:27px;height:13px;background:#7d3f6e;text-align:center;font-size:11px;letter-spacing:0.4px;text-indent:-0.6px;line-height:14px">-10</div>
<div class="a mono" style="left:720px;top:181px;width:27px;height:13px;background:#7d3f6e;text-align:center;font-size:11px;letter-spacing:0.4px;text-indent:-0.6px;line-height:14px">-10</div>
<div class="a mono" style="left:748px;top:181px;width:27px;height:13px;background:#7d3f6e;text-align:center;font-size:11px;letter-spacing:0.4px;text-indent:-0.6px;line-height:14px">-10</div>
<div class="a mono" style="left:244px;top:195px;width:27px;height:13px;background:#c05c20;text-align:center;font-size:11px;letter-spacing:0.4px;text-indent:-0.6px;line-height:14px">5</div>
<div class="a mono" style="left:272px;top:195px;width:27px;height:13px;background:#c05c20;text-align:center;font-size:11px;letter-spacing:0.4px;text-indent:-0.6px;line-height:14px">5</div>
<div class="a mono" style="left:300px;top:195px;width:27px;height:13px;background:#c05c20;text-align:center;font-size:11px;letter-spacing:0.4px;text-indent:-0.6px;line-height:14px">5</div>
<div class="a mono" style="left:328px;top:195px;width:27px;height:13px;background:#c05c20;text-align:center;font-size:11px;letter-spacing:0.4px;text-indent:-0.6px;line-height:14px">5</div>
<div class="a mono" style="left:356px;top:195px;width:27px;height:13px;background:#c05c20;text-align:center;font-size:11px;letter-spacing:0.4px;text-indent:-0.6px;line-height:14px">5</div>
<div class="a mono" style="left:384px;top:195px;width:27px;height:13px;background:#c86818;text-align:center;font-size:11px;letter-spacing:0.4px;text-indent:-0.6px;line-height:14px">8</div>
<div class="a mono" style="left:412px;top:195px;width:27px;height:13px;background:#d07c10;text-align:center;font-size:11px;letter-spacing:0.4px;text-indent:-0.6px;line-height:14px">13</div>
<div class="a mono" style="left:440px;top:195px;width:27px;height:13px;background:#b85c30;text-align:center;font-size:11px;letter-spacing:0.4px;text-indent:-0.6px;line-height:14px">3</div>
<div class="a mono" style="left:468px;top:195px;width:27px;height:13px;background:#b05840;text-align:center;font-size:11px;letter-spacing:0.4px;text-indent:-0.6px;line-height:14px">0</div>
<div class="a mono" style="left:496px;top:195px;width:27px;height:13px;background:#aa5248;text-align:center;font-size:11px;letter-spacing:0.4px;text-indent:-0.6px;line-height:14px">-3</div>
<div class="a mono" style="left:524px;top:195px;width:27px;height:13px;background:#985064;text-align:center;font-size:11px;letter-spacing:0.4px;text-indent:-0.6px;line-height:14px">-6</div>
<div class="a mono" style="left:552px;top:195px;width:27px;height:13px;background:#86427a;text-align:center;font-size:11px;letter-spacing:0.4px;text-indent:-0.6px;line-height:14px">-9</div>
<div class="a mono" style="left:580px;top:195px;width:27px;height:13px;background:#7d3f6e;text-align:center;font-size:11px;letter-spacing:0.4px;text-indent:-0.6px;line-height:14px">-10</div>
<div class="a mono" style="left:608px;top:195px;width:27px;height:13px;background:#7d3f6e;text-align:center;font-size:11px;letter-spacing:0.4px;text-indent:-0.6px;line-height:14px">-10</div>
<div class="a mono" style="left:636px;top:195px;width:27px;height:13px;background:#7d3f6e;text-align:center;font-size:11px;letter-spacing:0.4px;text-indent:-0.6px;line-height:14px">-10</div>
<div class="a mono" style="left:664px;top:195px;width:27px;height:13px;background:#7d3f6e;text-align:center;font-size:11px;letter-spacing:0.4px;text-indent:-0.6px;line-height:14px">-10</div>
<div class="a mono" style="left:692px;top:195px;width:27px;height:13px;background:#7d3f6e;text-align:center;font-size:11px;letter-spacing:0.4px;text-indent:-0.6px;line-height:14px">-10</div>
<div class="a mono" style="left:720px;top:195px;width:27px;height:13px;background:#7d3f6e;text-align:center;font-size:11px;letter-spacing:0.4px;text-indent:-0.6px;line-height:14px">-10</div>
<div class="a mono" style="left:748px;top:195px;width:27px;height:13px;background:#7d3f6e;text-align:center;font-size:11px;letter-spacing:0.4px;text-indent:-0.6px;line-height:14px">-10</div>
<div class="a mono" style="left:244px;top:209px;width:27px;height:13px;background:#c05c20;text-align:center;font-size:11px;letter-spacing:0.4px;text-indent:-0.6px;line-height:14px">5</div>
<div class="a mono" style="left:272px;top:209px;width:27px;height:13px;background:#c05c20;text-align:center;font-size:11px;letter-spacing:0.4px;text-indent:-0.6px;line-height:14px">5</div>
<div class="a mono" style="left:300px;top:209px;width:27px;height:13px;background:#c05c20;text-align:center;font-size:11px;letter-spacing:0.4px;text-indent:-0.6px;line-height:14px">5</div>
<div class="a mono" style="left:328px;top:209px;width:27px;height:13px;background:#c05c20;text-align:center;font-size:11px;letter-spacing:0.4px;text-indent:-0.6px;line-height:14px">5</div>
<div class="a mono" style="left:356px;top:209px;width:27px;height:13px;background:#ca6c16;text-align:center;font-size:11px;letter-spacing:0.4px;text-indent:-0.6px;line-height:14px">9</div>
<div class="a mono" style="left:384px;top:209px;width:27px;height:13px;background:#d07c10;text-align:center;font-size:11px;letter-spacing:0.4px;text-indent:-0.6px;line-height:14px">13</div>
<div class="a mono" style="left:412px;top:209px;width:27px;height:13px;background:#d59010;text-align:center;font-size:11px;letter-spacing:0.4px;text-indent:-0.6px;line-height:14px">18</div>
<div class="a mono" style="left:440px;top:209px;width:27px;height:13px;background:#c86818;text-align:center;font-size:11px;letter-spacing:0.4px;text-indent:-0.6px;line-height:14px">8</div>
<div class="a mono" style="left:468px;top:209px;width:27px;height:13px;background:#c3601d;text-align:center;font-size:11px;letter-spacing:0.4px;text-indent:-0.6px;line-height:14px">6</div>
<div class="a mono" style="left:496px;top:209px;width:27px;height:13px;background:#b85c30;text-align:center;font-size:11px;letter-spacing:0.4px;text-indent:-0.6px;line-height:14px">3</div>
<div class="a mono" style="left:524px;top:209px;width:27px;height:13px;background:#b05840;text-align:center;font-size:11px;letter-spacing:0.4px;text-indent:-0.6px;line-height:14px">0</div>
<div class="a mono" style="left:552px;top:209px;width:27px;height:13px;background:#aa5248;text-align:center;font-size:11px;letter-spacing:0.4px;text-indent:-0.6px;line-height:14px">-3</div>
<div class="a mono" style="left:580px;top:209px;width:27px;height:13px;background:#985064;text-align:center;font-size:11px;letter-spacing:0.4px;text-indent:-0.6px;line-height:14px">-6</div>
<div class="a mono" style="left:608px;top:209px;width:27px;height:13px;background:#86427a;text-align:center;font-size:11px;letter-spacing:0.4px;text-indent:-0.6px;line-height:14px">-9</div>
<div class="a mono" style="left:636px;top:209px;width:27px;height:13px;background:#7d3f6e;text-align:center;font-size:11px;letter-spacing:0.4px;text-indent:-0.6px;line-height:14px">-10</div>
<div class="a mono" style="left:664px;top:209px;width:27px;height:13px;background:#7d3f6e;text-align:center;font-size:11px;letter-spacing:0.4px;text-indent:-0.6px;line-height:14px">-10</div>
<div class="a mono" style="left:692px;top:209px;width:27px;height:13px;background:#7d3f6e;text-align:center;font-size:11px;letter-spacing:0.4px;text-indent:-0.6px;line-height:14px">-10</div>
<div class="a mono" style="left:720px;top:209px;width:27px;height:13px;background:#7d3f6e;text-align:center;font-size:11px;letter-spacing:0.4px;text-indent:-0.6px;line-height:14px">-10</div>
<div class="a mono" style="left:748px;top:209px;width:27px;height:13px;background:#7d3f6e;text-align:center;font-size:11px;letter-spacing:0.4px;text-indent:-0.6px;line-height:14px">-10</div>
<div class="a mono" style="left:244px;top:223px;width:27px;height:13px;background:#ce7812;text-align:center;font-size:11px;letter-spacing:0.4px;text-indent:-0.6px;line-height:14px">12</div>
<div class="a mono" style="left:272px;top:223px;width:27px;height:13px;background:#ce7812;text-align:center;font-size:11px;letter-spacing:0.4px;text-indent:-0.6px;line-height:14px">12</div>
<div class="a mono" style="left:300px;top:223px;width:27px;height:13px;background:#ce7812;text-align:center;font-size:11px;letter-spacing:0.4px;text-indent:-0.6px;line-height:14px">12</div>
<div class="a mono" style="left:328px;top:223px;width:27px;height:13px;background:#ce7812;text-align:center;font-size:11px;letter-spacing:0.4px;text-indent:-0.6px;line-height:14px">12</div>
<div class="a mono" style="left:356px;top:223px;width:27px;height:13px;background:#d08810;text-align:center;font-size:11px;letter-spacing:0.4px;text-indent:-0.6px;line-height:14px">16</div>
<div class="a mono" style="left:384px;top:223px;width:27px;height:13px;background:#d89810;text-align:center;font-size:11px;letter-spacing:0.4px;text-indent:-0.6px;line-height:14px">20</div>
<div class="a mono" style="left:412px;top:223px;width:27px;height:13px;background:#d89410;text-align:center;font-size:11px;letter-spacing:0.4px;text-indent:-0.6px;line-height:14px">19</div>
<div class="a mono" style="left:440px;top:223px;width:27px;height:13px;background:#d08410;text-align:center;font-size:11px;letter-spacing:0.4px;text-indent:-0.6px;line-height:14px">15</div>
<div class="a mono" style="left:468px;top:223px;width:27px;height:13px;background:#d07c10;text-align:center;font-size:11px;letter-spacing:0.4px;text-indent:-0.6px;line-height:14px">13</div>
<div class="a mono" style="left:496px;top:223px;width:27px;height:13px;background:#cd7413;text-align:center;font-size:11px;letter-spacing:0.4px;text-indent:-0.6px;line-height:14px">11</div>
<div class="a mono" style="left:524px;top:223px;width:27px;height:13px;background:#c5641b;text-align:center;font-size:11px;letter-spacing:0.4px;text-indent:-0.6px;line-height:14px">7</div>
<div class="a mono" style="left:552px;top:223px;width:27px;height:13px;background:#b85c30;text-align:center;font-size:11px;letter-spacing:0.4px;text-indent:-0.6px;line-height:14px">3</div>
<div class="a mono" style="left:580px;top:223px;width:27px;height:13px;background:#ae5643;text-align:center;font-size:11px;letter-spacing:0.4px;text-indent:-0.6px;line-height:14px">-1</div>
<div class="a mono" style="left:608px;top:223px;width:27px;height:13px;background:#a45151;text-align:center;font-size:11px;letter-spacing:0.4px;text-indent:-0.6px;line-height:14px">-4</div>
<div class="a mono" style="left:636px;top:223px;width:27px;height:13px;background:#924b6b;text-align:center;font-size:11px;letter-spacing:0.4px;text-indent:-0.6px;line-height:14px">-7</div>
<div class="a mono" style="left:664px;top:223px;width:27px;height:13px;background:#7d3f6e;text-align:center;font-size:11px;letter-spacing:0.4px;text-indent:-0.6px;line-height:14px">-10</div>
<div class="a mono" style="left:692px;top:223px;width:27px;height:13px;background:#7d3f6e;text-align:center;font-size:11px;letter-spacing:0.4px;text-indent:-0.6px;line-height:14px">-10</div>
<div class="a mono" style="left:720px;top:223px;width:27px;height:13px;background:#7d3f6e;text-align:center;font-size:11px;letter-spacing:0.4px;text-indent:-0.6px;line-height:14px">-10</div>
<div class="a mono" style="left:748px;top:223px;width:27px;height:13px;background:#7d3f6e;text-align:center;font-size:11px;letter-spacing:0.4px;text-indent:-0.6px;line-height:14px">-10</div>
<div class="a mono" style="left:244px;top:237px;width:27px;height:13px;background:#d89410;text-align:center;font-size:11px;letter-spacing:0.4px;text-indent:-0.6px;line-height:14px">19</div>
<div class="a mono" style="left:272px;top:237px;width:27px;height:13px;background:#d89410;text-align:center;font-size:11px;letter-spacing:0.4px;text-indent:-0.6px;line-height:14px">19</div>
<div class="a mono" style="left:300px;top:237px;width:27px;height:13px;background:#d89410;text-align:center;font-size:11px;letter-spacing:0.4px;text-indent:-0.6px;line-height:14px">19</div>
<div class="a mono" style="left:328px;top:237px;width:27px;height:13px;background:#d89410;text-align:center;font-size:11px;letter-spacing:0.4px;text-indent:-0.6px;line-height:14px">19</div>
<div class="a mono" style="left:356px;top:237px;width:27px;height:13px;background:#dcb410;text-align:center;font-size:11px;letter-spacing:0.4px;text-indent:-0.6px;line-height:14px">26</div>
<div class="a mono" style="left:384px;top:237px;width:27px;height:13px;background:#d8a810;text-align:center;font-size:11px;letter-spacing:0.4px;text-indent:-0.6px;line-height:14px">24</div>
<div class="a mono" style="left:412px;top:237px;width:27px;height:13px;background:#d8a410;text-align:center;font-size:11px;letter-spacing:0.4px;text-indent:-0.6px;line-height:14px">23</div>
<div class="a mono" style="left:440px;top:237px;width:27px;height:13px;background:#d89810;text-align:center;font-size:11px;letter-spacing:0.4px;text-indent:-0.6px;line-height:14px">20</div>
<div class="a mono" style="left:468px;top:237px;width:27px;height:13px;background:#d38c10;text-align:center;font-size:11px;letter-spacing:0.4px;text-indent:-0.6px;line-height:14px">17</div>
<div class="a mono" style="left:496px;top:237px;width:27px;height:13px;background:#d08410;text-align:center;font-size:11px;letter-spacing:0.4px;text-indent:-0.6px;line-height:14px">15</div>
<div class="a mono" style="left:524px;top:237px;width:27px;height:13px;background:#ce7812;text-align:center;font-size:11px;letter-spacing:0.4px;text-indent:-0.6px;line-height:14px">12</div>
<div class="a mono" style="left:552px;top:237px;width:27px;height:13px;background:#c86818;text-align:center;font-size:11px;letter-spacing:0.4px;text-indent:-0.6px;line-height:14px">8</div>
<div class="a mono" style="left:580px;top:237px;width:27px;height:13px;background:#c05c20;text-align:center;font-size:11px;letter-spacing:0.4px;text-indent:-0.6px;line-height:14px">5</div>
<div class="a mono" style="left:608px;top:237px;width:27px;height:13px;background:#b85c30;text-align:center;font-size:11px;letter-spacing:0.4px;text-indent:-0.6px;line-height:14px">3</div>
<div class="a mono" style="left:636px;top:237px;width:27px;height:13px;background:#b05840;text-align:center;font-size:11px;letter-spacing:0.4px;text-indent:-0.6px;line-height:14px">0</div>
<div class="a mono" style="left:664px;top:237px;width:27px;height:13px;background:#aa5248;text-align:center;font-size:11px;letter-spacing:0.4px;text-indent:-0.6px;line-height:14px">-3</div>
<div class="a mono" style="left:692px;top:237px;width:27px;height:13px;background:#9e515b;text-align:center;font-size:11px;letter-spacing:0.4px;text-indent:-0.6px;line-height:14px">-5</div>
<div class="a mono" style="left:720px;top:237px;width:27px;height:13px;background:#7d3f6e;text-align:center;font-size:11px;letter-spacing:0.4px;text-indent:-0.6px;line-height:14px">-10</div>
<div class="a mono" style="left:748px;top:237px;width:27px;height:13px;background:#7d3f6e;text-align:center;font-size:11px;letter-spacing:0.4px;text-indent:-0.6px;line-height:14px">-10</div>
<div class="a mono" style="left:244px;top:251px;width:27px;height:13px;background:#ecdc08;text-align:center;font-size:11px;letter-spacing:0.4px;text-indent:-0.6px;line-height:14px">32</div>
<div class="a mono" style="left:272px;top:251px;width:27px;height:13px;background:#ecdc08;text-align:center;font-size:11px;letter-spacing:0.4px;text-indent:-0.6px;line-height:14px">32</div>
<div class="a mono" style="left:300px;top:251px;width:27px;height:13px;background:#ecdc08;text-align:center;font-size:11px;letter-spacing:0.4px;text-indent:-0.6px;line-height:14px">32</div>
<div class="a mono" style="left:328px;top:251px;width:27px;height:13px;background:#ecdc08;text-align:center;font-size:11px;letter-spacing:0.4px;text-indent:-0.6px;line-height:14px">32</div>
<div class="a mono" style="left:356px;top:251px;width:27px;height:13px;background:#e4c810;text-align:center;font-size:11px;letter-spacing:0.4px;text-indent:-0.6px;line-height:14px">29</div>
<div class="a mono" style="left:384px;top:251px;width:27px;height:13px;background:#dcb410;text-align:center;font-size:11px;letter-spacing:0.4px;text-indent:-0.6px;line-height:14px">26</div>
<div class="a mono" style="left:412px;top:251px;width:27px;height:13px;background:#dcb410;text-align:center;font-size:11px;letter-spacing:0.4px;text-indent:-0.6px;line-height:14px">26</div>
<div class="a mono" style="left:440px;top:251px;width:27px;height:13px;background:#d8a810;text-align:center;font-size:11px;letter-spacing:0.4px;text-indent:-0.6px;line-height:14px">24</div>
<div class="a mono" style="left:468px;top:251px;width:27px;height:13px;background:#d89c10;text-align:center;font-size:11px;letter-spacing:0.4px;text-indent:-0.6px;line-height:14px">21</div>
<div class="a mono" style="left:496px;top:251px;width:27px;height:13px;background:#d38c10;text-align:center;font-size:11px;letter-spacing:0.4px;text-indent:-0.6px;line-height:14px">17</div>
<div class="a mono" style="left:524px;top:251px;width:27px;height:13px;background:#d08410;text-align:center;font-size:11px;letter-spacing:0.4px;text-indent:-0.6px;line-height:14px">15</div>
<div class="a mono" style="left:552px;top:251px;width:27px;height:13px;background:#ce7812;text-align:center;font-size:11px;letter-spacing:0.4px;text-indent:-0.6px;line-height:14px">12</div>
<div class="a mono" style="left:580px;top:251px;width:27px;height:13px;background:#ca6c16;text-align:center;font-size:11px;letter-spacing:0.4px;text-indent:-0.6px;line-height:14px">9</div>
<div class="a mono" style="left:608px;top:251px;width:27px;height:13px;background:#c3601d;text-align:center;font-size:11px;letter-spacing:0.4px;text-indent:-0.6px;line-height:14px">6</div>
<div class="a mono" style="left:636px;top:251px;width:27px;height:13px;background:#b85c30;text-align:center;font-size:11px;letter-spacing:0.4px;text-indent:-0.6px;line-height:14px">3</div>
<div class="a mono" style="left:664px;top:251px;width:27px;height:13px;background:#b05840;text-align:center;font-size:11px;letter-spacing:0.4px;text-indent:-0.6px;line-height:14px">0</div>
<div class="a mono" style="left:692px;top:251px;width:27px;height:13px;background:#aa5248;text-align:center;font-size:11px;letter-spacing:0.4px;text-indent:-0.6px;line-height:14px">-3</div>
<div class="a mono" style="left:720px;top:251px;width:27px;height:13px;background:#8c4773;text-align:center;font-size:11px;letter-spacing:0.4px;text-indent:-0.6px;line-height:14px">-8</div>
<div class="a mono" style="left:748px;top:251px;width:27px;height:13px;background:#86427a;text-align:center;font-size:11px;letter-spacing:0.4px;text-indent:-0.6px;line-height:14px">-9</div>
<div class="a mono" style="left:244px;top:265px;width:27px;height:13px;background:#f0e800;text-align:center;font-size:11px;letter-spacing:0.4px;text-indent:-0.6px;line-height:14px">34</div>
<div class="a mono" style="left:272px;top:265px;width:27px;height:13px;background:#f0e800;text-align:center;font-size:11px;letter-spacing:0.4px;text-indent:-0.6px;line-height:14px">34</div>
<div class="a mono" style="left:300px;top:265px;width:27px;height:13px;background:#f0e800;text-align:center;font-size:11px;letter-spacing:0.4px;text-indent:-0.6px;line-height:14px">34</div>
<div class="a mono" style="left:328px;top:265px;width:27px;height:13px;background:#f0e800;text-align:center;font-size:11px;letter-spacing:0.4px;text-indent:-0.6px;line-height:14px">34</div>
<div class="a mono" style="left:356px;top:265px;width:27px;height:13px;background:#f0e800;text-align:center;font-size:11px;letter-spacing:0.4px;text-indent:-0.6px;line-height:14px">34</div>
<div class="a mono" style="left:384px;top:265px;width:27px;height:13px;background:#ecdc08;text-align:center;font-size:11px;letter-spacing:0.4px;text-indent:-0.6px;line-height:14px">32</div>
<div class="a mono" style="left:412px;top:265px;width:27px;height:13px;background:#e9d50b;text-align:center;font-size:11px;letter-spacing:0.4px;text-indent:-0.6px;line-height:14px">31</div>
<div class="a mono" style="left:440px;top:265px;width:27px;height:13px;background:#e1c110;text-align:center;font-size:11px;letter-spacing:0.4px;text-indent:-0.6px;line-height:14px">28</div>
<div class="a mono" style="left:468px;top:265px;width:27px;height:13px;background:#d8a810;text-align:center;font-size:11px;letter-spacing:0.4px;text-indent:-0.6px;line-height:14px">24</div>
<div class="a mono" style="left:496px;top:265px;width:27px;height:13px;background:#d89810;text-align:center;font-size:11px;letter-spacing:0.4px;text-indent:-0.6px;line-height:14px">20</div>
<div class="a mono" style="left:524px;top:265px;width:27px;height:13px;background:#d38c10;text-align:center;font-size:11px;letter-spacing:0.4px;text-indent:-0.6px;line-height:14px">17</div>
<div class="a mono" style="left:552px;top:265px;width:27px;height:13px;background:#d08410;text-align:center;font-size:11px;letter-spacing:0.4px;text-indent:-0.6px;line-height:14px">15</div>
<div class="a mono" style="left:580px;top:265px;width:27px;height:13px;background:#ce7812;text-align:center;font-size:11px;letter-spacing:0.4px;text-indent:-0.6px;line-height:14px">12</div>
<div class="a mono" style="left:608px;top:265px;width:27px;height:13px;background:#ca6c16;text-align:center;font-size:11px;letter-spacing:0.4px;text-indent:-0.6px;line-height:14px">9</div>
<div class="a mono" style="left:636px;top:265px;width:27px;height:13px;background:#c3601d;text-align:center;font-size:11px;letter-spacing:0.4px;text-indent:-0.6px;line-height:14px">6</div>
<div class="a mono" style="left:664px;top:265px;width:27px;height:13px;background:#b85c30;text-align:center;font-size:11px;letter-spacing:0.4px;text-indent:-0.6px;line-height:14px">3</div>
<div class="a mono" style="left:692px;top:265px;width:27px;height:13px;background:#ac5445;text-align:center;font-size:11px;letter-spacing:0.4px;text-indent:-0.6px;line-height:14px">-2</div>
<div class="a mono" style="left:720px;top:265px;width:27px;height:13px;background:#a45151;text-align:center;font-size:11px;letter-spacing:0.4px;text-indent:-0.6px;line-height:14px">-4</div>
<div class="a mono" style="left:748px;top:265px;width:27px;height:13px;background:#985064;text-align:center;font-size:11px;letter-spacing:0.4px;text-indent:-0.6px;line-height:14px">-6</div>
<div class="a mono" style="left:244px;top:279px;width:27px;height:13px;background:#f8f800;text-align:center;font-size:11px;letter-spacing:0.4px;text-indent:-0.6px;line-height:14px">38</div>
<div class="a mono" style="left:272px;top:279px;width:27px;height:13px;background:#f8f800;text-align:center;font-size:11px;letter-spacing:0.4px;text-indent:-0.6px;line-height:14px">38</div>
<div class="a mono" style="left:300px;top:279px;width:27px;height:13px;background:#f8f800;text-align:center;font-size:11px;letter-spacing:0.4px;text-indent:-0.6px;line-height:14px">38</div>
<div class="a mono" style="left:328px;top:279px;width:27px;height:13px;background:#f8f800;text-align:center;font-size:11px;letter-spacing:0.4px;text-indent:-0.6px;line-height:14px">38</div>
<div class="a mono" style="left:356px;top:279px;width:27px;height:13px;background:#f0ec00;text-align:center;font-size:11px;letter-spacing:0.4px;text-indent:-0.6px;line-height:14px">35</div>
<div class="a mono" style="left:384px;top:279px;width:27px;height:13px;background:#eee204;text-align:center;font-size:11px;letter-spacing:0.4px;text-indent:-0.6px;line-height:14px">33</div>
<div class="a mono" style="left:412px;top:279px;width:27px;height:13px;background:#e9d50b;text-align:center;font-size:11px;letter-spacing:0.4px;text-indent:-0.6px;line-height:14px">31</div>
<div class="a mono" style="left:440px;top:279px;width:27px;height:13px;background:#e1c110;text-align:center;font-size:11px;letter-spacing:0.4px;text-indent:-0.6px;line-height:14px">28</div>
<div class="a mono" style="left:468px;top:279px;width:27px;height:13px;background:#daae10;text-align:center;font-size:11px;letter-spacing:0.4px;text-indent:-0.6px;line-height:14px">25</div>
<div class="a mono" style="left:496px;top:279px;width:27px;height:13px;background:#d8a010;text-align:center;font-size:11px;letter-spacing:0.4px;text-indent:-0.6px;line-height:14px">22</div>
<div class="a mono" style="left:524px;top:279px;width:27px;height:13px;background:#d89410;text-align:center;font-size:11px;letter-spacing:0.4px;text-indent:-0.6px;line-height:14px">19</div>
<div class="a mono" style="left:552px;top:279px;width:27px;height:13px;background:#d08810;text-align:center;font-size:11px;letter-spacing:0.4px;text-indent:-0.6px;line-height:14px">16</div>
<div class="a mono" style="left:580px;top:279px;width:27px;height:13px;background:#d08010;text-align:center;font-size:11px;letter-spacing:0.4px;text-indent:-0.6px;line-height:14px">14</div>
<div class="a mono" style="left:608px;top:279px;width:27px;height:13px;background:#ce7812;text-align:center;font-size:11px;letter-spacing:0.4px;text-indent:-0.6px;line-height:14px">12</div>
<div class="a mono" style="left:636px;top:279px;width:27px;height:13px;background:#ca6c16;text-align:center;font-size:11px;letter-spacing:0.4px;text-indent:-0.6px;line-height:14px">9</div>
<div class="a mono" style="left:664px;top:279px;width:27px;height:13px;background:#c3601d;text-align:center;font-size:11px;letter-spacing:0.4px;text-indent:-0.6px;line-height:14px">6</div>
<div class="a mono" style="left:692px;top:279px;width:27px;height:13px;background:#bc5c28;text-align:center;font-size:11px;letter-spacing:0.4px;text-indent:-0.6px;line-height:14px">4</div>
<div class="a mono" style="left:720px;top:279px;width:27px;height:13px;background:#ae5643;text-align:center;font-size:11px;letter-spacing:0.4px;text-indent:-0.6px;line-height:14px">-1</div>
<div class="a mono" style="left:748px;top:279px;width:27px;height:13px;background:#ac5445;text-align:center;font-size:11px;letter-spacing:0.4px;text-indent:-0.6px;line-height:14px">-2</div>
<div class="a mono" style="left:244px;top:293px;width:27px;height:13px;background:#f8f800;text-align:center;font-size:11px;letter-spacing:0.4px;text-indent:-0.6px;line-height:14px">38</div>
<div class="a mono" style="left:272px;top:293px;width:27px;height:13px;background:#f8f800;text-align:center;font-size:11px;letter-spacing:0.4px;text-indent:-0.6px;line-height:14px">38</div>
<div class="a mono" style="left:300px;top:293px;width:27px;height:13px;background:#f8f800;text-align:center;font-size:11px;letter-spacing:0.4px;text-indent:-0.6px;line-height:14px">38</div>
<div class="a mono" style="left:328px;top:293px;width:27px;height:13px;background:#f8f800;text-align:center;font-size:11px;letter-spacing:0.4px;text-indent:-0.6px;line-height:14px">38</div>
<div class="a mono" style="left:356px;top:293px;width:27px;height:13px;background:#f0ec00;text-align:center;font-size:11px;letter-spacing:0.4px;text-indent:-0.6px;line-height:14px">35</div>
<div class="a mono" style="left:384px;top:293px;width:27px;height:13px;background:#eee204;text-align:center;font-size:11px;letter-spacing:0.4px;text-indent:-0.6px;line-height:14px">33</div>
<div class="a mono" style="left:412px;top:293px;width:27px;height:13px;background:#e9d50b;text-align:center;font-size:11px;letter-spacing:0.4px;text-indent:-0.6px;line-height:14px">31</div>
<div class="a mono" style="left:440px;top:293px;width:27px;height:13px;background:#e1c110;text-align:center;font-size:11px;letter-spacing:0.4px;text-indent:-0.6px;line-height:14px">28</div>
<div class="a mono" style="left:468px;top:293px;width:27px;height:13px;background:#daae10;text-align:center;font-size:11px;letter-spacing:0.4px;text-indent:-0.6px;line-height:14px">25</div>
<div class="a mono" style="left:496px;top:293px;width:27px;height:13px;background:#d8a010;text-align:center;font-size:11px;letter-spacing:0.4px;text-indent:-0.6px;line-height:14px">22</div>
<div class="a mono" style="left:524px;top:293px;width:27px;height:13px;background:#d89810;text-align:center;font-size:11px;letter-spacing:0.4px;text-indent:-0.6px;line-height:14px">20</div>
<div class="a mono" style="left:552px;top:293px;width:27px;height:13px;background:#d38c10;text-align:center;font-size:11px;letter-spacing:0.4px;text-indent:-0.6px;line-height:14px">17</div>
<div class="a mono" style="left:580px;top:293px;width:27px;height:13px;background:#d08410;text-align:center;font-size:11px;letter-spacing:0.4px;text-indent:-0.6px;line-height:14px">15</div>
<div class="a mono" style="left:608px;top:293px;width:27px;height:13px;background:#d08010;text-align:center;font-size:11px;letter-spacing:0.4px;text-indent:-0.6px;line-height:14px">14</div>
<div class="a mono" style="left:636px;top:293px;width:27px;height:13px;background:#cd7413;text-align:center;font-size:11px;letter-spacing:0.4px;text-indent:-0.6px;line-height:14px">11</div>
<div class="a mono" style="left:664px;top:293px;width:27px;height:13px;background:#ca6c16;text-align:center;font-size:11px;letter-spacing:0.4px;text-indent:-0.6px;line-height:14px">9</div>
<div class="a mono" style="left:692px;top:293px;width:27px;height:13px;background:#c5641b;text-align:center;font-size:11px;letter-spacing:0.4px;text-indent:-0.6px;line-height:14px">7</div>
<div class="a mono" style="left:720px;top:293px;width:27px;height:13px;background:#bc5c28;text-align:center;font-size:11px;letter-spacing:0.4px;text-indent:-0.6px;line-height:14px">4</div>
<div class="a mono" style="left:748px;top:293px;width:27px;height:13px;background:#ae5643;text-align:center;font-size:11px;letter-spacing:0.4px;text-indent:-0.6px;line-height:14px">-1</div>
<div class="a mono" style="left:244px;top:307px;width:27px;height:13px;background:#f8f800;text-align:center;font-size:11px;letter-spacing:0.4px;text-indent:-0.6px;line-height:14px">38</div>
<div class="a mono" style="left:272px;top:307px;width:27px;height:13px;background:#f8f800;text-align:center;font-size:11px;letter-spacing:0.4px;text-indent:-0.6px;line-height:14px">38</div>
<div class="a mono" style="left:300px;top:307px;width:27px;height:13px;background:#f8f800;text-align:center;font-size:11px;letter-spacing:0.4px;text-indent:-0.6px;line-height:14px">38</div>
<div class="a mono" style="left:328px;top:307px;width:27px;height:13px;background:#f8f800;text-align:center;font-size:11px;letter-spacing:0.4px;text-indent:-0.6px;line-height:14px">38</div>
<div class="a mono" style="left:356px;top:307px;width:27px;height:13px;background:#f0ec00;text-align:center;font-size:11px;letter-spacing:0.4px;text-indent:-0.6px;line-height:14px">35</div>
<div class="a mono" style="left:384px;top:307px;width:27px;height:13px;background:#eee204;text-align:center;font-size:11px;letter-spacing:0.4px;text-indent:-0.6px;line-height:14px">33</div>
<div class="a mono" style="left:412px;top:307px;width:27px;height:13px;background:#e9d50b;text-align:center;font-size:11px;letter-spacing:0.4px;text-indent:-0.6px;line-height:14px">31</div>
<div class="a mono" style="left:440px;top:307px;width:27px;height:13px;background:#e4c810;text-align:center;font-size:11px;letter-spacing:0.4px;text-indent:-0.6px;line-height:14px">29</div>
<div class="a mono" style="left:468px;top:307px;width:27px;height:13px;background:#dcb410;text-align:center;font-size:11px;letter-spacing:0.4px;text-indent:-0.6px;line-height:14px">26</div>
<div class="a mono" style="left:496px;top:307px;width:27px;height:13px;background:#d8a410;text-align:center;font-size:11px;letter-spacing:0.4px;text-indent:-0.6px;line-height:14px">23</div>
<div class="a mono" style="left:524px;top:307px;width:27px;height:13px;background:#d89c10;text-align:center;font-size:11px;letter-spacing:0.4px;text-indent:-0.6px;line-height:14px">21</div>
<div class="a mono" style="left:552px;top:307px;width:27px;height:13px;background:#d59010;text-align:center;font-size:11px;letter-spacing:0.4px;text-indent:-0.6px;line-height:14px">18</div>
<div class="a mono" style="left:580px;top:307px;width:27px;height:13px;background:#d08810;text-align:center;font-size:11px;letter-spacing:0.4px;text-indent:-0.6px;line-height:14px">16</div>
<div class="a mono" style="left:608px;top:307px;width:27px;height:13px;background:#d08410;text-align:center;font-size:11px;letter-spacing:0.4px;text-indent:-0.6px;line-height:14px">15</div>
<div class="a mono" style="left:636px;top:307px;width:27px;height:13px;background:#d07c10;text-align:center;font-size:11px;letter-spacing:0.4px;text-indent:-0.6px;line-height:14px">13</div>
<div class="a mono" style="left:664px;top:307px;width:27px;height:13px;background:#cd7413;text-align:center;font-size:11px;letter-spacing:0.4px;text-indent:-0.6px;line-height:14px">11</div>
<div class="a mono" style="left:692px;top:307px;width:27px;height:13px;background:#ca6c16;text-align:center;font-size:11px;letter-spacing:0.4px;text-indent:-0.6px;line-height:14px">9</div>
<div class="a mono" style="left:720px;top:307px;width:27px;height:13px;background:#c3601d;text-align:center;font-size:11px;letter-spacing:0.4px;text-indent:-0.6px;line-height:14px">6</div>
<div class="a mono" style="left:748px;top:307px;width:27px;height:13px;background:#bc5c28;text-align:center;font-size:11px;letter-spacing:0.4px;text-indent:-0.6px;line-height:14px">4</div>
<div class="a mono" style="left:244px;top:321px;width:27px;height:13px;background:#f8f800;text-align:center;font-size:11px;letter-spacing:0.4px;text-indent:-0.6px;line-height:14px">38</div>
<div class="a mono" style="left:272px;top:321px;width:27px;height:13px;background:#f8f800;text-align:center;font-size:11px;letter-spacing:0.4px;text-indent:-0.6px;line-height:14px">38</div>
<div class="a mono" style="left:300px;top:321px;width:27px;height:13px;background:#f8f800;text-align:center;font-size:11px;letter-spacing:0.4px;text-indent:-0.6px;line-height:14px">38</div>
<div class="a mono" style="left:328px;top:321px;width:27px;height:13px;background:#f8f800;text-align:center;font-size:11px;letter-spacing:0.4px;text-indent:-0.6px;line-height:14px">38</div>
<div class="a mono" style="left:356px;top:321px;width:27px;height:13px;background:#f0ec00;text-align:center;font-size:11px;letter-spacing:0.4px;text-indent:-0.6px;line-height:14px">35</div>
<div class="a mono" style="left:384px;top:321px;width:27px;height:13px;background:#eee204;text-align:center;font-size:11px;letter-spacing:0.4px;text-indent:-0.6px;line-height:14px">33</div>
<div class="a mono" style="left:412px;top:321px;width:27px;height:13px;background:#e9d50b;text-align:center;font-size:11px;letter-spacing:0.4px;text-indent:-0.6px;line-height:14px">31</div>
<div class="a mono" style="left:440px;top:321px;width:27px;height:13px;background:#e4c810;text-align:center;font-size:11px;letter-spacing:0.4px;text-indent:-0.6px;line-height:14px">29</div>
<div class="a mono" style="left:468px;top:321px;width:27px;height:13px;background:#dcb410;text-align:center;font-size:11px;letter-spacing:0.4px;text-indent:-0.6px;line-height:14px">26</div>
<div class="a mono" style="left:496px;top:321px;width:27px;height:13px;background:#d8a410;text-align:center;font-size:11px;letter-spacing:0.4px;text-indent:-0.6px;line-height:14px">23</div>
<div class="a mono" style="left:524px;top:321px;width:27px;height:13px;background:#d8a010;text-align:center;font-size:11px;letter-spacing:0.4px;text-indent:-0.6px;line-height:14px">22</div>
<div class="a mono" style="left:552px;top:321px;width:27px;height:13px;background:#d89410;text-align:center;font-size:11px;letter-spacing:0.4px;text-indent:-0.6px;line-height:14px">19</div>
<div class="a mono" style="left:580px;top:321px;width:27px;height:13px;background:#d38c10;text-align:center;font-size:11px;letter-spacing:0.4px;text-indent:-0.6px;line-height:14px">17</div>
<div class="a mono" style="left:608px;top:321px;width:27px;height:13px;background:#d08810;text-align:center;font-size:11px;letter-spacing:0.4px;text-indent:-0.6px;line-height:14px">16</div>
<div class="a mono" style="left:636px;top:321px;width:27px;height:13px;background:#d08010;text-align:center;font-size:11px;letter-spacing:0.4px;text-indent:-0.6px;line-height:14px">14</div>
<div class="a mono" style="left:664px;top:321px;width:27px;height:13px;background:#d07c10;text-align:center;font-size:11px;letter-spacing:0.4px;text-indent:-0.6px;line-height:14px">13</div>
<div class="a mono" style="left:692px;top:321px;width:27px;height:13px;background:#cd7413;text-align:center;font-size:11px;letter-spacing:0.4px;text-indent:-0.6px;line-height:14px">11</div>
<div class="a mono" style="left:720px;top:321px;width:27px;height:13px;background:#ca6c16;text-align:center;font-size:11px;letter-spacing:0.4px;text-indent:-0.6px;line-height:14px">9</div>
<div class="a mono" style="left:748px;top:321px;width:27px;height:13px;background:#c3601d;text-align:center;font-size:11px;letter-spacing:0.4px;text-indent:-0.6px;line-height:14px">6</div>
<div class="a mono" style="left:244px;top:335px;width:27px;height:13px;background:#f8f800;text-align:center;font-size:11px;letter-spacing:0.4px;text-indent:-0.6px;line-height:14px">38</div>
<div class="a mono" style="left:272px;top:335px;width:27px;height:13px;background:#f8f800;text-align:center;font-size:11px;letter-spacing:0.4px;text-indent:-0.6px;line-height:14px">38</div>
<div class="a mono" style="left:300px;top:335px;width:27px;height:13px;background:#f8f800;text-align:center;font-size:11px;letter-spacing:0.4px;text-indent:-0.6px;line-height:14px">38</div>
<div class="a mono" style="left:328px;top:335px;width:27px;height:13px;background:#f8f800;text-align:center;font-size:11px;letter-spacing:0.4px;text-indent:-0.6px;line-height:14px">38</div>
<div class="a mono" style="left:356px;top:335px;width:27px;height:13px;background:#f0ec00;text-align:center;font-size:11px;letter-spacing:0.4px;text-indent:-0.6px;line-height:14px">35</div>
<div class="a mono" style="left:384px;top:335px;width:27px;height:13px;background:#eee204;text-align:center;font-size:11px;letter-spacing:0.4px;text-indent:-0.6px;line-height:14px">33</div>
<div class="a mono" style="left:412px;top:335px;width:27px;height:13px;background:#e9d50b;text-align:center;font-size:11px;letter-spacing:0.4px;text-indent:-0.6px;line-height:14px">31</div>
<div class="a mono" style="left:440px;top:335px;width:27px;height:13px;background:#e4c810;text-align:center;font-size:11px;letter-spacing:0.4px;text-indent:-0.6px;line-height:14px">29</div>
<div class="a mono" style="left:468px;top:335px;width:27px;height:13px;background:#dfbb10;text-align:center;font-size:11px;letter-spacing:0.4px;text-indent:-0.6px;line-height:14px">27</div>
<div class="a mono" style="left:496px;top:335px;width:27px;height:13px;background:#d8a810;text-align:center;font-size:11px;letter-spacing:0.4px;text-indent:-0.6px;line-height:14px">24</div>
<div class="a mono" style="left:524px;top:335px;width:27px;height:13px;background:#d8a410;text-align:center;font-size:11px;letter-spacing:0.4px;text-indent:-0.6px;line-height:14px">23</div>
<div class="a mono" style="left:552px;top:335px;width:27px;height:13px;background:#d89810;text-align:center;font-size:11px;letter-spacing:0.4px;text-indent:-0.6px;line-height:14px">20</div>
<div class="a mono" style="left:580px;top:335px;width:27px;height:13px;background:#d89410;text-align:center;font-size:11px;letter-spacing:0.4px;text-indent:-0.6px;line-height:14px">19</div>
<div class="a mono" style="left:608px;top:335px;width:27px;height:13px;background:#d59010;text-align:center;font-size:11px;letter-spacing:0.4px;text-indent:-0.6px;line-height:14px">18</div>
<div class="a mono" style="left:636px;top:335px;width:27px;height:13px;background:#d08810;text-align:center;font-size:11px;letter-spacing:0.4px;text-indent:-0.6px;line-height:14px">16</div>
<div class="a mono" style="left:664px;top:335px;width:27px;height:13px;background:#d08410;text-align:center;font-size:11px;letter-spacing:0.4px;text-indent:-0.6px;line-height:14px">15</div>
<div class="a mono" style="left:692px;top:335px;width:27px;height:13px;background:#d07c10;text-align:center;font-size:11px;letter-spacing:0.4px;text-indent:-0.6px;line-height:14px">13</div>
<div class="a mono" style="left:720px;top:335px;width:27px;height:13px;background:#cd7413;text-align:center;font-size:11px;letter-spacing:0.4px;text-indent:-0.6px;line-height:14px">11</div>
<div class="a mono" style="left:748px;top:335px;width:27px;height:13px;background:#ca6c16;text-align:center;font-size:11px;letter-spacing:0.4px;text-indent:-0.6px;line-height:14px">9</div>
<div class="a mono" style="left:244px;top:349px;width:27px;height:13px;background:#f8f800;text-align:center;font-size:11px;letter-spacing:0.4px;text-indent:-0.6px;line-height:14px">38</div>
<div class="a mono" style="left:272px;top:349px;width:27px;height:13px;background:#f8f800;text-align:center;font-size:11px;letter-spacing:0.4px;text-indent:-0.6px;line-height:14px">38</div>
<div class="a mono" style="left:300px;top:349px;width:27px;height:13px;background:#f8f800;text-align:center;font-size:11px;letter-spacing:0.4px;text-indent:-0.6px;line-height:14px">38</div>
<div class="a mono" style="left:328px;top:349px;width:27px;height:13px;background:#f8f800;text-align:center;font-size:11px;letter-spacing:0.4px;text-indent:-0.6px;line-height:14px">38</div>
<div class="a mono" style="left:356px;top:349px;width:27px;height:13px;background:#f0ec00;text-align:center;font-size:11px;letter-spacing:0.4px;text-indent:-0.6px;line-height:14px">35</div>
<div class="a mono" style="left:384px;top:349px;width:27px;height:13px;background:#eee204;text-align:center;font-size:11px;letter-spacing:0.4px;text-indent:-0.6px;line-height:14px">33</div>
<div class="a mono" style="left:412px;top:349px;width:27px;height:13px;background:#ecdc08;text-align:center;font-size:11px;letter-spacing:0.4px;text-indent:-0.6px;line-height:14px">32</div>
<div class="a mono" style="left:440px;top:349px;width:27px;height:13px;background:#e7cf0d;text-align:center;font-size:11px;letter-spacing:0.4px;text-indent:-0.6px;line-height:14px">30</div>
<div class="a mono" style="left:468px;top:349px;width:27px;height:13px;background:#dfbb10;text-align:center;font-size:11px;letter-spacing:0.4px;text-indent:-0.6px;line-height:14px">27</div>
<div class="a mono" style="left:496px;top:349px;width:27px;height:13px;background:#daae10;text-align:center;font-size:11px;letter-spacing:0.4px;text-indent:-0.6px;line-height:14px">25</div>
<div class="a mono" style="left:524px;top:349px;width:27px;height:13px;background:#d8a810;text-align:center;font-size:11px;letter-spacing:0.4px;text-indent:-0.6px;line-height:14px">24</div>
<div class="a mono" style="left:552px;top:349px;width:27px;height:13px;background:#d8a010;text-align:center;font-size:11px;letter-spacing:0.4px;text-indent:-0.6px;line-height:14px">22</div>
<div class="a mono" style="left:580px;top:349px;width:27px;height:13px;background:#d89c10;text-align:center;font-size:11px;letter-spacing:0.4px;text-indent:-0.6px;line-height:14px">21</div>
<div class="a mono" style="left:608px;top:349px;width:27px;height:13px;background:#d89810;text-align:center;font-size:11px;letter-spacing:0.4px;text-indent:-0.6px;line-height:14px">20</div>
<div class="a mono" style="left:636px;top:349px;width:27px;height:13px;background:#d59010;text-align:center;font-size:11px;letter-spacing:0.4px;text-indent:-0.6px;line-height:14px">18</div>
<div class="a mono" style="left:664px;top:349px;width:27px;height:13px;background:#d38c10;text-align:center;font-size:11px;letter-spacing:0.4px;text-indent:-0.6px;line-height:14px">17</div>
<div class="a mono" style="left:692px;top:349px;width:27px;height:13px;background:#d08410;text-align:center;font-size:11px;letter-spacing:0.4px;text-indent:-0.6px;line-height:14px">15</div>
<div class="a mono" style="left:720px;top:349px;width:27px;height:13px;background:#d07c10;text-align:center;font-size:11px;letter-spacing:0.4px;text-indent:-0.6px;line-height:14px">13</div>
<div class="a mono" style="left:748px;top:349px;width:27px;height:13px;background:#cd7413;text-align:center;font-size:11px;letter-spacing:0.4px;text-indent:-0.6px;line-height:14px">11</div>
<div class="a mono" style="left:244px;top:363px;width:27px;height:13px;background:#f8f800;text-align:center;font-size:11px;letter-spacing:0.4px;text-indent:-0.6px;line-height:14px">38</div>
<div class="a mono" style="left:272px;top:363px;width:27px;height:13px;background:#f8f800;text-align:center;font-size:11px;letter-spacing:0.4px;text-indent:-0.6px;line-height:14px">38</div>
<div class="a mono" style="left:300px;top:363px;width:27px;height:13px;background:#f8f800;text-align:center;font-size:11px;letter-spacing:0.4px;text-indent:-0.6px;line-height:14px">38</div>
<div class="a mono" style="left:328px;top:363px;width:27px;height:13px;background:#f8f800;text-align:center;font-size:11px;letter-spacing:0.4px;text-indent:-0.6px;line-height:14px">38</div>
<div class="a mono" style="left:356px;top:363px;width:27px;height:13px;background:#f0ec00;text-align:center;font-size:11px;letter-spacing:0.4px;text-indent:-0.6px;line-height:14px">35</div>
<div class="a mono" style="left:384px;top:363px;width:27px;height:13px;background:#f0ec00;text-align:center;font-size:11px;letter-spacing:0.4px;text-indent:-0.6px;line-height:14px">35</div>
<div class="a mono" style="left:412px;top:363px;width:27px;height:13px;background:#f0ec00;text-align:center;font-size:11px;letter-spacing:0.4px;text-indent:-0.6px;line-height:14px">35</div>
<div class="a mono" style="left:440px;top:363px;width:27px;height:13px;background:#e7cf0d;text-align:center;font-size:11px;letter-spacing:0.4px;text-indent:-0.6px;line-height:14px">30</div>
<div class="a mono" style="left:468px;top:363px;width:27px;height:13px;background:#e1c110;text-align:center;font-size:11px;letter-spacing:0.4px;text-indent:-0.6px;line-height:14px">28</div>
<div class="a mono" style="left:496px;top:363px;width:27px;height:13px;background:#dcb410;text-align:center;font-size:11px;letter-spacing:0.4px;text-indent:-0.6px;line-height:14px">26</div>
<div class="a mono" style="left:524px;top:363px;width:27px;height:13px;background:#daae10;text-align:center;font-size:11px;letter-spacing:0.4px;text-indent:-0.6px;line-height:14px">25</div>
<div class="a mono" style="left:552px;top:363px;width:27px;height:13px;background:#d8a410;text-align:center;font-size:11px;letter-spacing:0.4px;text-indent:-0.6px;line-height:14px">23</div>
<div class="a mono" style="left:580px;top:363px;width:27px;height:13px;background:#d8a010;text-align:center;font-size:11px;letter-spacing:0.4px;text-indent:-0.6px;line-height:14px">22</div>
<div class="a mono" style="left:608px;top:363px;width:27px;height:13px;background:#d89c10;text-align:center;font-size:11px;letter-spacing:0.4px;text-indent:-0.6px;line-height:14px">21</div>
<div class="a mono" style="left:636px;top:363px;width:27px;height:13px;background:#d89410;text-align:center;font-size:11px;letter-spacing:0.4px;text-indent:-0.6px;line-height:14px">19</div>
<div class="a mono" style="left:664px;top:363px;width:27px;height:13px;background:#d59010;text-align:center;font-size:11px;letter-spacing:0.4px;text-indent:-0.6px;line-height:14px">18</div>
<div class="a mono" style="left:692px;top:363px;width:27px;height:13px;background:#d08810;text-align:center;font-size:11px;letter-spacing:0.4px;text-indent:-0.6px;line-height:14px">16</div>
<div class="a mono" style="left:720px;top:363px;width:27px;height:13px;background:#d08010;text-align:center;font-size:11px;letter-spacing:0.4px;text-indent:-0.6px;line-height:14px">14</div>
<div class="a mono" style="left:748px;top:363px;width:27px;height:13px;background:#ce7812;text-align:center;font-size:11px;letter-spacing:0.4px;text-indent:-0.6px;line-height:14px">12</div>
<div class="a mono" style="left:244px;top:377px;width:27px;height:13px;background:#f8f800;text-align:center;font-size:11px;letter-spacing:0.4px;text-indent:-0.6px;line-height:14px">38</div>
<div class="a mono" style="left:272px;top:377px;width:27px;height:13px;background:#f8f800;text-align:center;font-size:11px;letter-spacing:0.4px;text-indent:-0.6px;line-height:14px">38</div>
<div class="a mono" style="left:300px;top:377px;width:27px;height:13px;background:#f8f800;text-align:center;font-size:11px;letter-spacing:0.4px;text-indent:-0.6px;line-height:14px">38</div>
<div class="a mono" style="left:328px;top:377px;width:27px;height:13px;background:#f8f800;text-align:center;font-size:11px;letter-spacing:0.4px;text-indent:-0.6px;line-height:14px">38</div>
<div class="a mono" style="left:356px;top:377px;width:27px;height:13px;background:#f8f800;text-align:center;font-size:11px;letter-spacing:0.4px;text-indent:-0.6px;line-height:14px">38</div>
<div class="a mono" style="left:384px;top:377px;width:27px;height:13px;background:#f3f000;text-align:center;font-size:11px;letter-spacing:0.4px;text-indent:-0.6px;line-height:14px">36</div>
<div class="a mono" style="left:412px;top:377px;width:27px;height:13px;background:#f0ec00;text-align:center;font-size:11px;letter-spacing:0.4px;text-indent:-0.6px;line-height:14px">35</div>
<div class="a mono" style="left:440px;top:377px;width:27px;height:13px;background:#ecdc08;text-align:center;font-size:11px;letter-spacing:0.4px;text-indent:-0.6px;line-height:14px">32</div>
<div class="a mono" style="left:468px;top:377px;width:27px;height:13px;background:#e7cf0d;text-align:center;font-size:11px;letter-spacing:0.4px;text-indent:-0.6px;line-height:14px">30</div>
<div class="a mono" style="left:496px;top:377px;width:27px;height:13px;background:#dfbb10;text-align:center;font-size:11px;letter-spacing:0.4px;text-indent:-0.6px;line-height:14px">27</div>
<div class="a mono" style="left:524px;top:377px;width:27px;height:13px;background:#dcb410;text-align:center;font-size:11px;letter-spacing:0.4px;text-indent:-0.6px;line-height:14px">26</div>
<div class="a mono" style="left:552px;top:377px;width:27px;height:13px;background:#d8a810;text-align:center;font-size:11px;letter-spacing:0.4px;text-indent:-0.6px;line-height:14px">24</div>
<div class="a mono" style="left:580px;top:377px;width:27px;height:13px;background:#d8a410;text-align:center;font-size:11px;letter-spacing:0.4px;text-indent:-0.6px;line-height:14px">23</div>
<div class="a mono" style="left:608px;top:377px;width:27px;height:13px;background:#d8a010;text-align:center;font-size:11px;letter-spacing:0.4px;text-indent:-0.6px;line-height:14px">22</div>
<div class="a mono" style="left:636px;top:377px;width:27px;height:13px;background:#d89810;text-align:center;font-size:11px;letter-spacing:0.4px;text-indent:-0.6px;line-height:14px">20</div>
<div class="a mono" style="left:664px;top:377px;width:27px;height:13px;background:#d89410;text-align:center;font-size:11px;letter-spacing:0.4px;text-indent:-0.6px;line-height:14px">19</div>
<div class="a mono" style="left:692px;top:377px;width:27px;height:13px;background:#d38c10;text-align:center;font-size:11px;letter-spacing:0.4px;text-indent:-0.6px;line-height:14px">17</div>
<div class="a mono" style="left:720px;top:377px;width:27px;height:13px;background:#d08410;text-align:center;font-size:11px;letter-spacing:0.4px;text-indent:-0.6px;line-height:14px">15</div>
<div class="a mono" style="left:748px;top:377px;width:27px;height:13px;background:#d07c10;text-align:center;font-size:11px;letter-spacing:0.4px;text-indent:-0.6px;line-height:14px">13</div>
<div class="a mono" style="left:244px;top:391px;width:27px;height:13px;background:#f8f800;text-align:center;font-size:11px;letter-spacing:0.4px;text-indent:-0.6px;line-height:14px">38</div>
<div class="a mono" style="left:272px;top:391px;width:27px;height:13px;background:#f8f800;text-align:center;font-size:11px;letter-spacing:0.4px;text-indent:-0.6px;line-height:14px">38</div>
<div class="a mono" style="left:300px;top:391px;width:27px;height:13px;background:#f8f800;text-align:center;font-size:11px;letter-spacing:0.4px;text-indent:-0.6px;line-height:14px">38</div>
<div class="a mono" style="left:328px;top:391px;width:27px;height:13px;background:#f8f800;text-align:center;font-size:11px;letter-spacing:0.4px;text-indent:-0.6px;line-height:14px">38</div>
<div class="a mono" style="left:356px;top:391px;width:27px;height:13px;background:#f8f800;text-align:center;font-size:11px;letter-spacing:0.4px;text-indent:-0.6px;line-height:14px">38</div>
<div class="a mono" style="left:384px;top:391px;width:27px;height:13px;background:#f3f000;text-align:center;font-size:11px;letter-spacing:0.4px;text-indent:-0.6px;line-height:14px">36</div>
<div class="a mono" style="left:412px;top:391px;width:27px;height:13px;background:#f0ec00;text-align:center;font-size:11px;letter-spacing:0.4px;text-indent:-0.6px;line-height:14px">35</div>
<div class="a mono" style="left:440px;top:391px;width:27px;height:13px;background:#ecdc08;text-align:center;font-size:11px;letter-spacing:0.4px;text-indent:-0.6px;line-height:14px">32</div>
<div class="a mono" style="left:468px;top:391px;width:27px;height:13px;background:#e9d50b;text-align:center;font-size:11px;letter-spacing:0.4px;text-indent:-0.6px;line-height:14px">31</div>
<div class="a mono" style="left:496px;top:391px;width:27px;height:13px;background:#e1c110;text-align:center;font-size:11px;letter-spacing:0.4px;text-indent:-0.6px;line-height:14px">28</div>
<div class="a mono" style="left:524px;top:391px;width:27px;height:13px;background:#dfbb10;text-align:center;font-size:11px;letter-spacing:0.4px;text-indent:-0.6px;line-height:14px">27</div>
<div class="a mono" style="left:552px;top:391px;width:27px;height:13px;background:#daae10;text-align:center;font-size:11px;letter-spacing:0.4px;text-indent:-0.6px;line-height:14px">25</div>
<div class="a mono" style="left:580px;top:391px;width:27px;height:13px;background:#d8a810;text-align:center;font-size:11px;letter-spacing:0.4px;text-indent:-0.6px;line-height:14px">24</div>
<div class="a mono" style="left:608px;top:391px;width:27px;height:13px;background:#d8a410;text-align:center;font-size:11px;letter-spacing:0.4px;text-indent:-0.6px;line-height:14px">23</div>
<div class="a mono" style="left:636px;top:391px;width:27px;height:13px;background:#d89c10;text-align:center;font-size:11px;letter-spacing:0.4px;text-indent:-0.6px;line-height:14px">21</div>
<div class="a mono" style="left:664px;top:391px;width:27px;height:13px;background:#d89810;text-align:center;font-size:11px;letter-spacing:0.4px;text-indent:-0.6px;line-height:14px">20</div>
<div class="a mono" style="left:692px;top:391px;width:27px;height:13px;background:#d59010;text-align:center;font-size:11px;letter-spacing:0.4px;text-indent:-0.6px;line-height:14px">18</div>
<div class="a mono" style="left:720px;top:391px;width:27px;height:13px;background:#d08810;text-align:center;font-size:11px;letter-spacing:0.4px;text-indent:-0.6px;line-height:14px">16</div>
<div class="a mono" style="left:748px;top:391px;width:27px;height:13px;background:#d08010;text-align:center;font-size:11px;letter-spacing:0.4px;text-indent:-0.6px;line-height:14px">14</div>
<div class="a mono" style="left:244px;top:405px;width:27px;height:13px;background:#f8f800;text-align:center;font-size:11px;letter-spacing:0.4px;text-indent:-0.6px;line-height:14px">38</div>
<div class="a mono" style="left:272px;top:405px;width:27px;height:13px;background:#f8f800;text-align:center;font-size:11px;letter-spacing:0.4px;text-indent:-0.6px;line-height:14px">38</div>
<div class="a mono" style="left:300px;top:405px;width:27px;height:13px;background:#f8f800;text-align:center;font-size:11px;letter-spacing:0.4px;text-indent:-0.6px;line-height:14px">38</div>
<div class="a mono" style="left:328px;top:405px;width:27px;height:13px;background:#f8f800;text-align:center;font-size:11px;letter-spacing:0.4px;text-indent:-0.6px;line-height:14px">38</div>
<div class="a mono" style="left:356px;top:405px;width:27px;height:13px;background:#f8f800;text-align:center;font-size:11px;letter-spacing:0.4px;text-indent:-0.6px;line-height:14px">38</div>
<div class="a mono" style="left:384px;top:405px;width:27px;height:13px;background:#f3f000;text-align:center;font-size:11px;letter-spacing:0.4px;text-indent:-0.6px;line-height:14px">36</div>
<div class="a mono" style="left:412px;top:405px;width:27px;height:13px;background:#f0ec00;text-align:center;font-size:11px;letter-spacing:0.4px;text-indent:-0.6px;line-height:14px">35</div>
<div class="a mono" style="left:440px;top:405px;width:27px;height:13px;background:#ecdc08;text-align:center;font-size:11px;letter-spacing:0.4px;text-indent:-0.6px;line-height:14px">32</div>
<div class="a mono" style="left:468px;top:405px;width:27px;height:13px;background:#e9d50b;text-align:center;font-size:11px;letter-spacing:0.4px;text-indent:-0.6px;line-height:14px">31</div>
<div class="a mono" style="left:496px;top:405px;width:27px;height:13px;background:#e4c810;text-align:center;font-size:11px;letter-spacing:0.4px;text-indent:-0.6px;line-height:14px">29</div>
<div class="a mono" style="left:524px;top:405px;width:27px;height:13px;background:#e1c110;text-align:center;font-size:11px;letter-spacing:0.4px;text-indent:-0.6px;line-height:14px">28</div>
<div class="a mono" style="left:552px;top:405px;width:27px;height:13px;background:#dcb410;text-align:center;font-size:11px;letter-spacing:0.4px;text-indent:-0.6px;line-height:14px">26</div>
<div class="a mono" style="left:580px;top:405px;width:27px;height:13px;background:#daae10;text-align:center;font-size:11px;letter-spacing:0.4px;text-indent:-0.6px;line-height:14px">25</div>
<div class="a mono" style="left:608px;top:405px;width:27px;height:13px;background:#d8a810;text-align:center;font-size:11px;letter-spacing:0.4px;text-indent:-0.6px;line-height:14px">24</div>
<div class="a mono" style="left:636px;top:405px;width:27px;height:13px;background:#d8a010;text-align:center;font-size:11px;letter-spacing:0.4px;text-indent:-0.6px;line-height:14px">22</div>
<div class="a mono" style="left:664px;top:405px;width:27px;height:13px;background:#d89c10;text-align:center;font-size:11px;letter-spacing:0.4px;text-indent:-0.6px;line-height:14px">21</div>
<div class="a mono" style="left:692px;top:405px;width:27px;height:13px;background:#d89410;text-align:center;font-size:11px;letter-spacing:0.4px;text-indent:-0.6px;line-height:14px">19</div>
<div class="a mono" style="left:720px;top:405px;width:27px;height:13px;background:#d38c10;text-align:center;font-size:11px;letter-spacing:0.4px;text-indent:-0.6px;line-height:14px">17</div>
<div class="a mono" style="left:748px;top:405px;width:27px;height:13px;background:#d08410;text-align:center;font-size:11px;letter-spacing:0.4px;text-indent:-0.6px;line-height:14px">15</div>
<div class="a mono" style="left:244px;top:419px;width:27px;height:13px;background:#f8f800;text-align:center;font-size:11px;letter-spacing:0.4px;text-indent:-0.6px;line-height:14px">38</div>
<div class="a mono" style="left:272px;top:419px;width:27px;height:13px;background:#f8f800;text-align:center;font-size:11px;letter-spacing:0.4px;text-indent:-0.6px;line-height:14px">38</div>
<div class="a mono" style="left:300px;top:419px;width:27px;height:13px;background:#f8f800;text-align:center;font-size:11px;letter-spacing:0.4px;text-indent:-0.6px;line-height:14px">38</div>
<div class="a mono" style="left:328px;top:419px;width:27px;height:13px;background:#f8f800;text-align:center;font-size:11px;letter-spacing:0.4px;text-indent:-0.6px;line-height:14px">38</div>
<div class="a mono" style="left:356px;top:419px;width:27px;height:13px;background:#f8f800;text-align:center;font-size:11px;letter-spacing:0.4px;text-indent:-0.6px;line-height:14px">38</div>
<div class="a mono" style="left:384px;top:419px;width:27px;height:13px;background:#f3f000;text-align:center;font-size:11px;letter-spacing:0.4px;text-indent:-0.6px;line-height:14px">36</div>
<div class="a mono" style="left:412px;top:419px;width:27px;height:13px;background:#f0ec00;text-align:center;font-size:11px;letter-spacing:0.4px;text-indent:-0.6px;line-height:14px">35</div>
<div class="a mono" style="left:440px;top:419px;width:27px;height:13px;background:#ecdc08;text-align:center;font-size:11px;letter-spacing:0.4px;text-indent:-0.6px;line-height:14px">32</div>
<div class="a mono" style="left:468px;top:419px;width:27px;height:13px;background:#e9d50b;text-align:center;font-size:11px;letter-spacing:0.4px;text-indent:-0.6px;line-height:14px">31</div>
<div class="a mono" style="left:496px;top:419px;width:27px;height:13px;background:#e4c810;text-align:center;font-size:11px;letter-spacing:0.4px;text-indent:-0.6px;line-height:14px">29</div>
<div class="a mono" style="left:524px;top:419px;width:27px;height:13px;background:#e1c110;text-align:center;font-size:11px;letter-spacing:0.4px;text-indent:-0.6px;line-height:14px">28</div>
<div class="a mono" style="left:552px;top:419px;width:27px;height:13px;background:#dcb410;text-align:center;font-size:11px;letter-spacing:0.4px;text-indent:-0.6px;line-height:14px">26</div>
<div class="a mono" style="left:580px;top:419px;width:27px;height:13px;background:#daae10;text-align:center;font-size:11px;letter-spacing:0.4px;text-indent:-0.6px;line-height:14px">25</div>
<div class="a mono" style="left:608px;top:419px;width:27px;height:13px;background:#d8a810;text-align:center;font-size:11px;letter-spacing:0.4px;text-indent:-0.6px;line-height:14px">24</div>
<div class="a mono" style="left:636px;top:419px;width:27px;height:13px;background:#d8a010;text-align:center;font-size:11px;letter-spacing:0.4px;text-indent:-0.6px;line-height:14px">22</div>
<div class="a mono" style="left:664px;top:419px;width:27px;height:13px;background:#d89c10;text-align:center;font-size:11px;letter-spacing:0.4px;text-indent:-0.6px;line-height:14px">21</div>
<div class="a mono" style="left:692px;top:419px;width:27px;height:13px;background:#d89410;text-align:center;font-size:11px;letter-spacing:0.4px;text-indent:-0.6px;line-height:14px">19</div>
<div class="a mono" style="left:720px;top:419px;width:27px;height:13px;background:#d38c10;text-align:center;font-size:11px;letter-spacing:0.4px;text-indent:-0.6px;line-height:14px">17</div>
<div class="a mono" style="left:748px;top:419px;width:27px;height:13px;background:#d08410;text-align:center;font-size:11px;letter-spacing:0.4px;text-indent:-0.6px;line-height:14px">15</div>
</body></html>
